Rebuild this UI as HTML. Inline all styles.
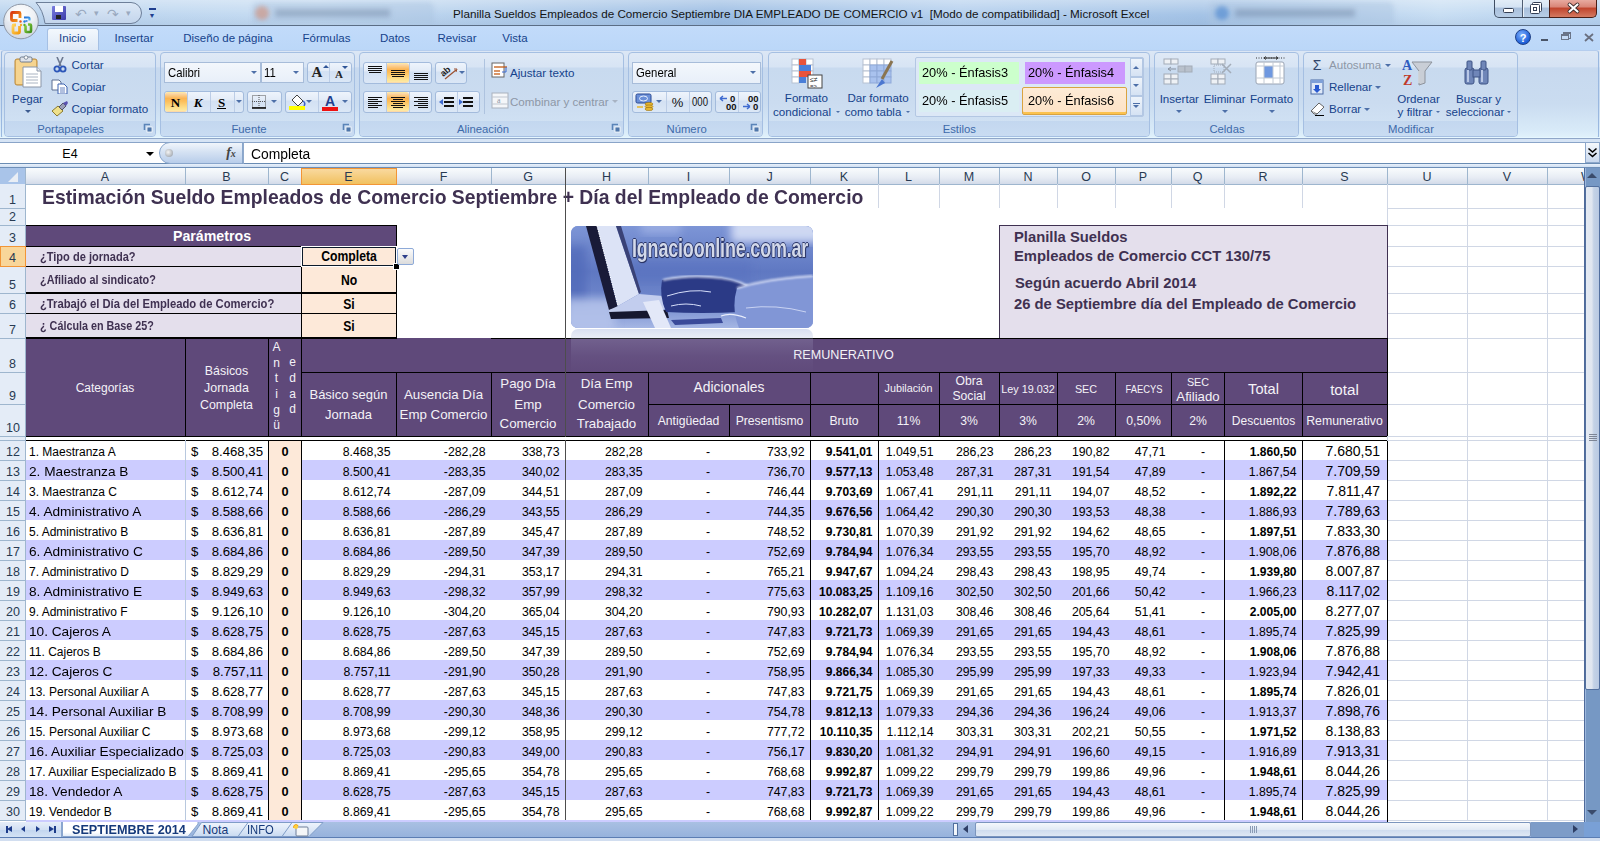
<!DOCTYPE html>
<html><head><meta charset="utf-8"><style>
html,body{margin:0;padding:0;width:1600px;height:841px;overflow:hidden;background:#fff}
#root{position:relative;width:1600px;height:841px;overflow:hidden;font-family:"Liberation Sans",sans-serif}
#root div{position:absolute}
#root .t{white-space:pre}
</style></head><body><div id="root">
<div style="left:0px;top:0px;width:1600px;height:25px;background:linear-gradient(90deg,#b9d3ee 0%,#c6dcf2 20%,#9cbde3 45%,#b5d0ee 60%,#a4c3e6 75%,#c8def3 90%,#b7d2ef 100%)"></div>
<div style="left:0px;top:0px;width:1600px;height:25px;background:linear-gradient(180deg,rgba(255,255,255,.35),rgba(255,255,255,0) 60%,rgba(120,150,190,.15))"></div>
<div style="left:252px;top:2px;width:182px;height:23px;background:rgba(170,195,225,.45);border-radius:6px 6px 0 0;filter:blur(2px)"></div>
<div style="left:1209px;top:2px;width:185px;height:23px;background:rgba(170,195,225,.45);border-radius:6px 6px 0 0;filter:blur(2px)"></div>
<div style="left:255px;top:6px;width:14px;height:14px;background:rgba(220,120,80,.45);border-radius:50%;filter:blur(2px)"></div>
<div style="left:275px;top:9px;width:115px;height:8px;background:rgba(60,80,110,.25);filter:blur(2.5px)"></div>
<div style="left:1215px;top:6px;width:14px;height:14px;background:rgba(40,110,200,.45);border-radius:50%;filter:blur(2px)"></div>
<div style="left:1235px;top:9px;width:120px;height:8px;background:rgba(60,80,110,.25);filter:blur(2.5px)"></div>
<div style="left:0px;top:25px;width:1600px;height:1px;background:#5b6d85"></div>
<div class="t" style="left:453px;top:8.10px;font-size:11.7px;line-height:11.7px;color:#141414;">Planilla Sueldos Empleados de Comercio Septiembre DIA EMPLEADO DE COMERCIO v1  [Modo de compatibilidad] - Microsoft Excel</div>
<div style="left:1494px;top:-1px;width:56px;height:19px;border:1px solid #3f4d62;border-top:none;border-radius:0 0 0 5px;background:linear-gradient(#e4eef8,#d4e3f3 45%,#a9c0dc 50%,#b7cde6);box-sizing:border-box"></div>
<div style="left:1549px;top:-1px;width:48px;height:19px;border:1px solid #4a1e16;border-top:none;border-radius:0 0 5px 0;background:linear-gradient(#eab0a6,#d98476 45%,#c0432c 50%,#d47a62);box-sizing:border-box"></div>
<div style="left:1522px;top:0px;width:1px;height:17px;background:#4f5d72"></div>
<div style="left:1523px;top:0px;width:1px;height:17px;background:#e8f0f8"></div>
<svg style="position:absolute;left:1500px;top:0" width="100" height="17"><rect x="3.5" y="8.5" width="10" height="4" rx="1" fill="#fff" stroke="#343f55"/><rect x="32.5" y="2.5" width="9" height="9" rx="1" fill="#fff" stroke="#343f55"/><rect x="30.5" y="4.5" width="9" height="9" rx="1" fill="#fff" stroke="#343f55"/><rect x="33.5" y="7.5" width="3" height="3" fill="none" stroke="#343f55"/><path d="M69.5,4.5 L77.5,11.5 M77.5,4.5 L69.5,11.5" stroke="#3a2a2a" stroke-width="3.8" stroke-linecap="round"/><path d="M69.5,4.5 L77.5,11.5 M77.5,4.5 L69.5,11.5" stroke="#fff" stroke-width="2.2" stroke-linecap="round"/></svg>
<svg style="position:absolute;left:30px;top:0" width="120" height="26"><defs><linearGradient id="qg" x1="0" y1="0" x2="0" y2="1"><stop offset="0" stop-color="#dde9f7"/><stop offset="1" stop-color="#c3d5ec"/></linearGradient></defs><path d="M6,2.5 H101 A10.5,10.5 0 0 1 101,23.5 H15 Q13,10 6,2.5 Z" fill="url(#qg)" stroke="#6d7f99"/></svg>
<div style="left:52px;top:6px;width:14px;height:14px;background:linear-gradient(135deg,#7a7de0,#3b3ba8);border-radius:1px"></div>
<div style="left:55px;top:6px;width:8px;height:6px;background:#fff"></div>
<div style="left:56px;top:15px;width:5px;height:4px;background:#222"></div>
<div class="t" style="left:81px;top:7.15px;font-size:14px;line-height:14px;color:#9aa9bf;transform:translateX(-50%) scaleX(1.0);transform-origin:50% 0;">&#x21B6;</div>
<div class="t" style="left:96px;top:9.38px;font-size:9px;line-height:9px;color:#9aa9bf;transform:translateX(-50%) scaleX(1.0);transform-origin:50% 0;">&#x25BE;</div>
<div class="t" style="left:113px;top:7.15px;font-size:14px;line-height:14px;color:#9aa9bf;transform:translateX(-50%) scaleX(1.0);transform-origin:50% 0;">&#x21B7;</div>
<div class="t" style="left:128px;top:9.38px;font-size:9px;line-height:9px;color:#9aa9bf;transform:translateX(-50%) scaleX(1.0);transform-origin:50% 0;">&#x25BE;</div>
<div style="left:149px;top:8px;width:7px;height:2px;background:#1f3f8f"></div>
<div class="t" style="left:152px;top:12.07px;font-size:7px;line-height:7px;color:#1f3f8f;transform:translateX(-50%) scaleX(1.0);transform-origin:50% 0;">&#x25BC;</div>
<div style="left:0px;top:26px;width:1600px;height:24px;background:linear-gradient(#c2dbfa,#bbd7f8)"></div>
<svg style="position:absolute;left:0;top:0" width="45" height="45" viewBox="0 0 45 45">
<defs><radialGradient id="ob" cx="50%" cy="30%" r="70%"><stop offset="0" stop-color="#ffffff"/><stop offset=".55" stop-color="#eef1f5"/><stop offset="1" stop-color="#c6cfdb"/></radialGradient>
<linearGradient id="obr" x1="0" y1="0" x2="1" y2="1"><stop offset="0" stop-color="#d9360f"/><stop offset="1" stop-color="#f7a21b"/></linearGradient>
<linearGradient id="oby" x1="0" y1="0" x2="1" y2="1"><stop offset="0" stop-color="#ffd35a"/><stop offset="1" stop-color="#f39c12"/></linearGradient>
<linearGradient id="obg" x1="0" y1="0" x2="1" y2="1"><stop offset="0" stop-color="#8cd13b"/><stop offset="1" stop-color="#3f8f1c"/></linearGradient>
<linearGradient id="obb" x1="0" y1="0" x2="1" y2="1"><stop offset="0" stop-color="#1e6fd8"/><stop offset="1" stop-color="#4fb2f0"/></linearGradient></defs>
<circle cx="21" cy="21.5" r="17.3" fill="url(#ob)" stroke="#8f98a6" stroke-width="1"/>
<path d="M4.5,21.5 A16.5,16.5 0 0 0 37.5,21.5" fill="#dfe5ee" opacity=".45"/>
<path d="M17.5,20.5 H12.5 Q11.5,20.5 11.5,19.5 V13.5 Q11.5,12.5 12.5,12.5 H19 Q20,12.5 20,13.5 V18" fill="none" stroke="url(#obr)" stroke-width="2.8"/>
<path d="M24,17.5 H28.5 Q29.5,17.5 29.5,18.5 V20.5" fill="none" stroke="url(#obb)" stroke-width="2.2"/><path d="M25.5,21 H27.5" stroke="#2a7ddf" stroke-width="1.6"/>
<path d="M19.5,26 V32 Q19.5,33 18.5,33 H14 Q13,33 13,32 V26 Q13,25 14,25 H16" fill="none" stroke="url(#oby)" stroke-width="2.8"/>
<path d="M25.5,25.5 V31 Q25.5,32 26.5,32 H30 Q31,32 31,31 V25.5 Q31,24.5 30,24.5 H28" fill="none" stroke="url(#obg)" stroke-width="2.6"/>
<circle cx="20.5" cy="21.5" r="1.2" fill="#e8561c"/><circle cx="24.5" cy="21.5" r="1.2" fill="#2a7ddf"/><circle cx="21" cy="25" r="1.2" fill="#f6b02a"/><circle cx="24.5" cy="25" r="1.2" fill="#58b02a"/>
</svg>
<div style="left:47px;top:28px;width:52px;height:23px;background:linear-gradient(#f3f8fd,#dde8f6);border:1px solid #a5c0e4;border-bottom:none;border-radius:3px 3px 0 0;box-sizing:border-box"></div>
<div class="t" style="left:72.5px;top:33.27px;font-size:11.5px;line-height:11.5px;color:#15428b;transform:translateX(-50%) scaleX(1.0);transform-origin:50% 0;">Inicio</div>
<div class="t" style="left:134px;top:33.27px;font-size:11.5px;line-height:11.5px;color:#15428b;transform:translateX(-50%) scaleX(1.0);transform-origin:50% 0;">Insertar</div>
<div class="t" style="left:228px;top:33.27px;font-size:11.5px;line-height:11.5px;color:#15428b;transform:translateX(-50%) scaleX(1.0);transform-origin:50% 0;">Diseño de página</div>
<div class="t" style="left:326.5px;top:33.27px;font-size:11.5px;line-height:11.5px;color:#15428b;transform:translateX(-50%) scaleX(1.0);transform-origin:50% 0;">Fórmulas</div>
<div class="t" style="left:395px;top:33.27px;font-size:11.5px;line-height:11.5px;color:#15428b;transform:translateX(-50%) scaleX(1.0);transform-origin:50% 0;">Datos</div>
<div class="t" style="left:457px;top:33.27px;font-size:11.5px;line-height:11.5px;color:#15428b;transform:translateX(-50%) scaleX(1.0);transform-origin:50% 0;">Revisar</div>
<div class="t" style="left:515px;top:33.27px;font-size:11.5px;line-height:11.5px;color:#15428b;transform:translateX(-50%) scaleX(1.0);transform-origin:50% 0;">Vista</div>
<div style="left:1515px;top:29px;width:16px;height:16px;border-radius:50%;background:radial-gradient(circle at 40% 35%,#7fb2ff,#1b5cd6 70%);border:1px solid #1d3f86;box-sizing:border-box"></div>
<div class="t" style="left:1523px;top:32.69px;font-size:11px;line-height:11px;color:#fff;font-weight:bold;transform:translateX(-50%) scaleX(1.0);transform-origin:50% 0;">?</div>
<div style="left:1541px;top:39px;width:7px;height:2px;background:#4a5568"></div>
<svg style="position:absolute;left:1561px;top:32px" width="14" height="12"><rect x="2.5" y="0.5" width="7" height="6" fill="none" stroke="#6a7588"/><rect x="2.5" y="0.5" width="7" height="1.5" fill="#6a7588"/><rect x="0.5" y="2.5" width="7" height="5" fill="#c5dbf6" stroke="#6a7588"/><rect x="0.5" y="2.5" width="7" height="1.5" fill="#6a7588"/></svg>
<svg style="position:absolute;left:1584px;top:33px" width="10" height="9"><path d="M1,1 L9,8 M9,1 L1,8" stroke="#6a7080" stroke-width="1.8"/></svg>
<div style="left:0px;top:50px;width:1600px;height:89px;background:linear-gradient(#dce7f5 0%,#d5e2f3 19%,#c7d9ef 20%,#cadcf0 60%,#d8eaf8 90%,#e2f3fc 100%)"></div>
<div style="left:1px;top:50px;width:1598px;height:89px;border:1px solid #9ab8e0;border-top-color:#b5cdee;border-radius:3px;box-sizing:border-box"></div>
<div style="left:0px;top:137px;width:1600px;height:1px;background:#e6f7ff"></div>
<div style="left:0px;top:138px;width:1600px;height:1px;background:#8fa6c8"></div>
<div style="left:4px;top:52px;width:152px;height:85px;border:1px solid #a5bfe2;border-radius:4px;background:linear-gradient(#dfe9f6 0%,#d7e4f4 17%,#c8daef 18%,#cbdcf0 60%,#d3e4f5 100%);box-sizing:border-box"></div>
<div style="left:5px;top:121px;width:150px;height:15px;background:linear-gradient(#c3d7ef,#c9dcf2);border-radius:0 0 3px 3px"></div>
<div class="t" style="left:70.6px;top:124.03px;font-size:11.3px;line-height:11.3px;color:#3e6aaa;transform:translateX(-50%) scaleX(1.0);transform-origin:50% 0;">Portapapeles</div>
<div style="left:160px;top:52px;width:195px;height:85px;border:1px solid #a5bfe2;border-radius:4px;background:linear-gradient(#dfe9f6 0%,#d7e4f4 17%,#c8daef 18%,#cbdcf0 60%,#d3e4f5 100%);box-sizing:border-box"></div>
<div style="left:161px;top:121px;width:193px;height:15px;background:linear-gradient(#c3d7ef,#c9dcf2);border-radius:0 0 3px 3px"></div>
<div class="t" style="left:249px;top:124.03px;font-size:11.3px;line-height:11.3px;color:#3e6aaa;transform:translateX(-50%) scaleX(1.0);transform-origin:50% 0;">Fuente</div>
<div style="left:359px;top:52px;width:265px;height:85px;border:1px solid #a5bfe2;border-radius:4px;background:linear-gradient(#dfe9f6 0%,#d7e4f4 17%,#c8daef 18%,#cbdcf0 60%,#d3e4f5 100%);box-sizing:border-box"></div>
<div style="left:360px;top:121px;width:263px;height:15px;background:linear-gradient(#c3d7ef,#c9dcf2);border-radius:0 0 3px 3px"></div>
<div class="t" style="left:483px;top:124.03px;font-size:11.3px;line-height:11.3px;color:#3e6aaa;transform:translateX(-50%) scaleX(1.0);transform-origin:50% 0;">Alineación</div>
<div style="left:628px;top:52px;width:135px;height:85px;border:1px solid #a5bfe2;border-radius:4px;background:linear-gradient(#dfe9f6 0%,#d7e4f4 17%,#c8daef 18%,#cbdcf0 60%,#d3e4f5 100%);box-sizing:border-box"></div>
<div style="left:629px;top:121px;width:133px;height:15px;background:linear-gradient(#c3d7ef,#c9dcf2);border-radius:0 0 3px 3px"></div>
<div class="t" style="left:686.6px;top:124.03px;font-size:11.3px;line-height:11.3px;color:#3e6aaa;transform:translateX(-50%) scaleX(1.0);transform-origin:50% 0;">Número</div>
<div style="left:768px;top:52px;width:382px;height:85px;border:1px solid #a5bfe2;border-radius:4px;background:linear-gradient(#dfe9f6 0%,#d7e4f4 17%,#c8daef 18%,#cbdcf0 60%,#d3e4f5 100%);box-sizing:border-box"></div>
<div style="left:769px;top:121px;width:380px;height:15px;background:linear-gradient(#c3d7ef,#c9dcf2);border-radius:0 0 3px 3px"></div>
<div class="t" style="left:959.3px;top:124.03px;font-size:11.3px;line-height:11.3px;color:#3e6aaa;transform:translateX(-50%) scaleX(1.0);transform-origin:50% 0;">Estilos</div>
<div style="left:1154px;top:52px;width:145px;height:85px;border:1px solid #a5bfe2;border-radius:4px;background:linear-gradient(#dfe9f6 0%,#d7e4f4 17%,#c8daef 18%,#cbdcf0 60%,#d3e4f5 100%);box-sizing:border-box"></div>
<div style="left:1155px;top:121px;width:143px;height:15px;background:linear-gradient(#c3d7ef,#c9dcf2);border-radius:0 0 3px 3px"></div>
<div class="t" style="left:1227px;top:124.03px;font-size:11.3px;line-height:11.3px;color:#3e6aaa;transform:translateX(-50%) scaleX(1.0);transform-origin:50% 0;">Celdas</div>
<div style="left:1303px;top:52px;width:215px;height:85px;border:1px solid #a5bfe2;border-radius:4px;background:linear-gradient(#dfe9f6 0%,#d7e4f4 17%,#c8daef 18%,#cbdcf0 60%,#d3e4f5 100%);box-sizing:border-box"></div>
<div style="left:1304px;top:121px;width:213px;height:15px;background:linear-gradient(#c3d7ef,#c9dcf2);border-radius:0 0 3px 3px"></div>
<div class="t" style="left:1411px;top:124.03px;font-size:11.3px;line-height:11.3px;color:#3e6aaa;transform:translateX(-50%) scaleX(1.0);transform-origin:50% 0;">Modificar</div>
<svg style="position:absolute;left:143px;top:123px" width="10" height="10"><path d="M1.5,7 V1.5 H7" stroke="#5a84b8" stroke-width="1.6" fill="none"/><rect x="4" y="4" width="5" height="5" fill="#4f77ab" stroke="#fff" stroke-width=".8"/></svg>
<svg style="position:absolute;left:342px;top:123px" width="10" height="10"><path d="M1.5,7 V1.5 H7" stroke="#5a84b8" stroke-width="1.6" fill="none"/><rect x="4" y="4" width="5" height="5" fill="#4f77ab" stroke="#fff" stroke-width=".8"/></svg>
<svg style="position:absolute;left:611px;top:123px" width="10" height="10"><path d="M1.5,7 V1.5 H7" stroke="#5a84b8" stroke-width="1.6" fill="none"/><rect x="4" y="4" width="5" height="5" fill="#4f77ab" stroke="#fff" stroke-width=".8"/></svg>
<svg style="position:absolute;left:750px;top:123px" width="10" height="10"><path d="M1.5,7 V1.5 H7" stroke="#5a84b8" stroke-width="1.6" fill="none"/><rect x="4" y="4" width="5" height="5" fill="#4f77ab" stroke="#fff" stroke-width=".8"/></svg>
<div style="left:0px;top:139px;width:1600px;height:29px;background:#d6e4f5"></div>
<div style="left:0px;top:142px;width:1600px;height:22px;background:#fff;border-top:1px solid #8aa4c8;border-bottom:1px solid #6a8cb3;box-sizing:border-box"></div>
<div style="left:0px;top:164px;width:1600px;height:3px;background:linear-gradient(#e9f1fb,#cfdff2)"></div>
<div style="left:0px;top:167px;width:1600px;height:1px;background:#6e8fb8"></div>
<div class="t" style="left:70px;top:148.42px;font-size:12.5px;line-height:12.5px;color:#000;transform:translateX(-50%) scaleX(1.0);transform-origin:50% 0;">E4</div>
<div style="left:145.5px;top:151.5px;width:0;height:0;border-left:4px solid transparent;border-right:4px solid transparent;border-top:4.5px solid #000"></div>
<div style="left:159px;top:142px;width:84px;height:22px;border:1px solid #89a6cc;border-radius:11px 0 0 11px;background:linear-gradient(#f0f5fb,#d5e2f3 45%,#b8cdea);box-sizing:border-box"></div>
<div style="left:165px;top:149px;width:8px;height:8px;border-radius:50%;background:radial-gradient(circle at 40% 40%,#f4f4f4,#8e96a0)"></div>
<div class="t" style="left:231px;top:146.15px;font-size:14px;line-height:14px;color:#444;font-family:'Liberation Serif',serif;transform:translateX(-50%) scaleX(1.0);transform-origin:50% 0;"><b><i>f</i><i style="font-size:10px">x</i></b></div>
<div style="left:243px;top:142px;width:1px;height:22px;background:#8fa9cb"></div>
<div class="t" style="left:251px;top:147.15px;font-size:14px;line-height:14px;color:#000;transform:scaleX(0.99);transform-origin:0 0;">Completa</div>
<div style="left:1585px;top:142px;width:15px;height:21px;background:linear-gradient(#f5f8fc,#c8d8ee);border:1px solid #8ea8cb;box-sizing:border-box"></div>
<svg style="position:absolute;left:1587px;top:147px" width="11" height="12"><path d="M1.5,1.5 L5.5,5 L9.5,1.5 M1.5,6 L5.5,9.5 L9.5,6" stroke="#000" stroke-width="1.6" fill="none"/></svg>
<div style="left:0px;top:168px;width:1584px;height:653px;background:#fff"></div>
<div style="left:185px;top:184px;width:1px;height:637px;background:#d0d7e5"></div>
<div style="left:268px;top:184px;width:1px;height:637px;background:#d0d7e5"></div>
<div style="left:301px;top:184px;width:1px;height:637px;background:#d0d7e5"></div>
<div style="left:396px;top:184px;width:1px;height:637px;background:#d0d7e5"></div>
<div style="left:491px;top:184px;width:1px;height:637px;background:#d0d7e5"></div>
<div style="left:565px;top:184px;width:1px;height:637px;background:#d0d7e5"></div>
<div style="left:648px;top:184px;width:1px;height:637px;background:#d0d7e5"></div>
<div style="left:729px;top:184px;width:1px;height:637px;background:#d0d7e5"></div>
<div style="left:810px;top:184px;width:1px;height:637px;background:#d0d7e5"></div>
<div style="left:878px;top:184px;width:1px;height:637px;background:#d0d7e5"></div>
<div style="left:939px;top:184px;width:1px;height:637px;background:#d0d7e5"></div>
<div style="left:999px;top:184px;width:1px;height:637px;background:#d0d7e5"></div>
<div style="left:1057px;top:184px;width:1px;height:637px;background:#d0d7e5"></div>
<div style="left:1115px;top:184px;width:1px;height:637px;background:#d0d7e5"></div>
<div style="left:1171px;top:184px;width:1px;height:637px;background:#d0d7e5"></div>
<div style="left:1224px;top:184px;width:1px;height:637px;background:#d0d7e5"></div>
<div style="left:1302px;top:184px;width:1px;height:637px;background:#d0d7e5"></div>
<div style="left:1387px;top:184px;width:1px;height:637px;background:#d0d7e5"></div>
<div style="left:1467px;top:184px;width:1px;height:637px;background:#d0d7e5"></div>
<div style="left:1547px;top:184px;width:1px;height:637px;background:#d0d7e5"></div>
<div style="left:1627px;top:184px;width:1px;height:637px;background:#d0d7e5"></div>
<div style="left:25px;top:208px;width:1559px;height:1px;background:#d0d7e5"></div>
<div style="left:25px;top:225px;width:1559px;height:1px;background:#d0d7e5"></div>
<div style="left:25px;top:246px;width:1559px;height:1px;background:#d0d7e5"></div>
<div style="left:25px;top:266px;width:1559px;height:1px;background:#d0d7e5"></div>
<div style="left:25px;top:293px;width:1559px;height:1px;background:#d0d7e5"></div>
<div style="left:25px;top:313px;width:1559px;height:1px;background:#d0d7e5"></div>
<div style="left:25px;top:338px;width:1559px;height:1px;background:#d0d7e5"></div>
<div style="left:25px;top:372px;width:1559px;height:1px;background:#d0d7e5"></div>
<div style="left:25px;top:404px;width:1559px;height:1px;background:#d0d7e5"></div>
<div style="left:25px;top:436px;width:1559px;height:1px;background:#d0d7e5"></div>
<div style="left:25px;top:460px;width:1559px;height:1px;background:#d0d7e5"></div>
<div style="left:25px;top:480px;width:1559px;height:1px;background:#d0d7e5"></div>
<div style="left:25px;top:500px;width:1559px;height:1px;background:#d0d7e5"></div>
<div style="left:25px;top:520px;width:1559px;height:1px;background:#d0d7e5"></div>
<div style="left:25px;top:540px;width:1559px;height:1px;background:#d0d7e5"></div>
<div style="left:25px;top:560px;width:1559px;height:1px;background:#d0d7e5"></div>
<div style="left:25px;top:580px;width:1559px;height:1px;background:#d0d7e5"></div>
<div style="left:25px;top:600px;width:1559px;height:1px;background:#d0d7e5"></div>
<div style="left:25px;top:620px;width:1559px;height:1px;background:#d0d7e5"></div>
<div style="left:25px;top:640px;width:1559px;height:1px;background:#d0d7e5"></div>
<div style="left:25px;top:660px;width:1559px;height:1px;background:#d0d7e5"></div>
<div style="left:25px;top:680px;width:1559px;height:1px;background:#d0d7e5"></div>
<div style="left:25px;top:700px;width:1559px;height:1px;background:#d0d7e5"></div>
<div style="left:25px;top:720px;width:1559px;height:1px;background:#d0d7e5"></div>
<div style="left:25px;top:740px;width:1559px;height:1px;background:#d0d7e5"></div>
<div style="left:25px;top:760px;width:1559px;height:1px;background:#d0d7e5"></div>
<div style="left:25px;top:780px;width:1559px;height:1px;background:#d0d7e5"></div>
<div style="left:25px;top:800px;width:1559px;height:1px;background:#d0d7e5"></div>
<div style="left:25px;top:820px;width:1559px;height:1px;background:#d0d7e5"></div>
<div style="left:0px;top:168px;width:1584px;height:16px;background:linear-gradient(#f9fcfd,#e7ecf4 60%,#d3dbe9)"></div>
<div style="left:0px;top:184px;width:1584px;height:1px;background:#9eb6ce"></div>
<div style="left:185px;top:168px;width:1px;height:16px;background:#9eb6ce"></div>
<div class="t" style="left:105.0px;top:171.22px;font-size:12.5px;line-height:12.5px;color:#283a52;transform:translateX(-50%) scaleX(1.0);transform-origin:50% 0;">A</div>
<div style="left:268px;top:168px;width:1px;height:16px;background:#9eb6ce"></div>
<div class="t" style="left:226.5px;top:171.22px;font-size:12.5px;line-height:12.5px;color:#283a52;transform:translateX(-50%) scaleX(1.0);transform-origin:50% 0;">B</div>
<div style="left:301px;top:168px;width:1px;height:16px;background:#9eb6ce"></div>
<div class="t" style="left:284.5px;top:171.22px;font-size:12.5px;line-height:12.5px;color:#283a52;transform:translateX(-50%) scaleX(1.0);transform-origin:50% 0;">C</div>
<div style="left:396px;top:168px;width:1px;height:16px;background:#9eb6ce"></div>
<div class="t" style="left:348.5px;top:171.22px;font-size:12.5px;line-height:12.5px;color:#283a52;transform:translateX(-50%) scaleX(1.0);transform-origin:50% 0;">E</div>
<div style="left:491px;top:168px;width:1px;height:16px;background:#9eb6ce"></div>
<div class="t" style="left:443.5px;top:171.22px;font-size:12.5px;line-height:12.5px;color:#283a52;transform:translateX(-50%) scaleX(1.0);transform-origin:50% 0;">F</div>
<div style="left:565px;top:168px;width:1px;height:16px;background:#9eb6ce"></div>
<div class="t" style="left:528.0px;top:171.22px;font-size:12.5px;line-height:12.5px;color:#283a52;transform:translateX(-50%) scaleX(1.0);transform-origin:50% 0;">G</div>
<div style="left:648px;top:168px;width:1px;height:16px;background:#9eb6ce"></div>
<div class="t" style="left:606.5px;top:171.22px;font-size:12.5px;line-height:12.5px;color:#283a52;transform:translateX(-50%) scaleX(1.0);transform-origin:50% 0;">H</div>
<div style="left:729px;top:168px;width:1px;height:16px;background:#9eb6ce"></div>
<div class="t" style="left:688.5px;top:171.22px;font-size:12.5px;line-height:12.5px;color:#283a52;transform:translateX(-50%) scaleX(1.0);transform-origin:50% 0;">I</div>
<div style="left:810px;top:168px;width:1px;height:16px;background:#9eb6ce"></div>
<div class="t" style="left:769.5px;top:171.22px;font-size:12.5px;line-height:12.5px;color:#283a52;transform:translateX(-50%) scaleX(1.0);transform-origin:50% 0;">J</div>
<div style="left:878px;top:168px;width:1px;height:16px;background:#9eb6ce"></div>
<div class="t" style="left:844.0px;top:171.22px;font-size:12.5px;line-height:12.5px;color:#283a52;transform:translateX(-50%) scaleX(1.0);transform-origin:50% 0;">K</div>
<div style="left:939px;top:168px;width:1px;height:16px;background:#9eb6ce"></div>
<div class="t" style="left:908.5px;top:171.22px;font-size:12.5px;line-height:12.5px;color:#283a52;transform:translateX(-50%) scaleX(1.0);transform-origin:50% 0;">L</div>
<div style="left:999px;top:168px;width:1px;height:16px;background:#9eb6ce"></div>
<div class="t" style="left:969.0px;top:171.22px;font-size:12.5px;line-height:12.5px;color:#283a52;transform:translateX(-50%) scaleX(1.0);transform-origin:50% 0;">M</div>
<div style="left:1057px;top:168px;width:1px;height:16px;background:#9eb6ce"></div>
<div class="t" style="left:1028.0px;top:171.22px;font-size:12.5px;line-height:12.5px;color:#283a52;transform:translateX(-50%) scaleX(1.0);transform-origin:50% 0;">N</div>
<div style="left:1115px;top:168px;width:1px;height:16px;background:#9eb6ce"></div>
<div class="t" style="left:1086.0px;top:171.22px;font-size:12.5px;line-height:12.5px;color:#283a52;transform:translateX(-50%) scaleX(1.0);transform-origin:50% 0;">O</div>
<div style="left:1171px;top:168px;width:1px;height:16px;background:#9eb6ce"></div>
<div class="t" style="left:1143.0px;top:171.22px;font-size:12.5px;line-height:12.5px;color:#283a52;transform:translateX(-50%) scaleX(1.0);transform-origin:50% 0;">P</div>
<div style="left:1224px;top:168px;width:1px;height:16px;background:#9eb6ce"></div>
<div class="t" style="left:1197.5px;top:171.22px;font-size:12.5px;line-height:12.5px;color:#283a52;transform:translateX(-50%) scaleX(1.0);transform-origin:50% 0;">Q</div>
<div style="left:1302px;top:168px;width:1px;height:16px;background:#9eb6ce"></div>
<div class="t" style="left:1263.0px;top:171.22px;font-size:12.5px;line-height:12.5px;color:#283a52;transform:translateX(-50%) scaleX(1.0);transform-origin:50% 0;">R</div>
<div style="left:1387px;top:168px;width:1px;height:16px;background:#9eb6ce"></div>
<div class="t" style="left:1344.5px;top:171.22px;font-size:12.5px;line-height:12.5px;color:#283a52;transform:translateX(-50%) scaleX(1.0);transform-origin:50% 0;">S</div>
<div style="left:1467px;top:168px;width:1px;height:16px;background:#9eb6ce"></div>
<div class="t" style="left:1427.0px;top:171.22px;font-size:12.5px;line-height:12.5px;color:#283a52;transform:translateX(-50%) scaleX(1.0);transform-origin:50% 0;">U</div>
<div style="left:1547px;top:168px;width:1px;height:16px;background:#9eb6ce"></div>
<div class="t" style="left:1507.0px;top:171.22px;font-size:12.5px;line-height:12.5px;color:#283a52;transform:translateX(-50%) scaleX(1.0);transform-origin:50% 0;">V</div>
<div class="t" style="left:1587.0px;top:171.22px;font-size:12.5px;line-height:12.5px;color:#283a52;transform:translateX(-50%) scaleX(1.0);transform-origin:50% 0;">W</div>
<div style="left:0px;top:168px;width:25px;height:16px;background:#a9c4e9"></div>
<div style="left:8px;top:172px;width:0;height:0;border-left:10px solid transparent;border-bottom:10px solid #e9eef5"></div>
<div style="left:301px;top:168px;width:96px;height:17px;background:linear-gradient(#f9d99f,#f1c15f);border:1px solid #f29536;box-sizing:border-box"></div>
<div class="t" style="left:348.5px;top:171.22px;font-size:12.5px;line-height:12.5px;color:#283a52;transform:translateX(-50%) scaleX(1.0);transform-origin:50% 0;">E</div>
<div style="left:0px;top:184px;width:25px;height:637px;background:#e4ecf7"></div>
<div style="left:25px;top:168px;width:1px;height:653px;background:#9eb6ce"></div>
<div style="left:0px;top:208px;width:25px;height:1px;background:#9eb6ce"></div>
<div class="t" style="left:12.5px;top:194.12px;font-size:12.5px;line-height:12.5px;color:#283a52;transform:translateX(-50%) scaleX(1.0);transform-origin:50% 0;">1</div>
<div style="left:0px;top:225px;width:25px;height:1px;background:#9eb6ce"></div>
<div class="t" style="left:12.5px;top:211.12px;font-size:12.5px;line-height:12.5px;color:#283a52;transform:translateX(-50%) scaleX(1.0);transform-origin:50% 0;">2</div>
<div style="left:0px;top:246px;width:25px;height:1px;background:#9eb6ce"></div>
<div class="t" style="left:12.5px;top:232.12px;font-size:12.5px;line-height:12.5px;color:#283a52;transform:translateX(-50%) scaleX(1.0);transform-origin:50% 0;">3</div>
<div style="left:0px;top:266px;width:25px;height:1px;background:#9eb6ce"></div>
<div style="left:0px;top:246px;width:26px;height:21px;background:#f8d69a;border:1px solid #f29536;box-sizing:border-box"></div>
<div class="t" style="left:12.5px;top:252.12px;font-size:12.5px;line-height:12.5px;color:#283a52;transform:translateX(-50%) scaleX(1.0);transform-origin:50% 0;">4</div>
<div style="left:0px;top:293px;width:25px;height:1px;background:#9eb6ce"></div>
<div class="t" style="left:12.5px;top:279.12px;font-size:12.5px;line-height:12.5px;color:#283a52;transform:translateX(-50%) scaleX(1.0);transform-origin:50% 0;">5</div>
<div style="left:0px;top:313px;width:25px;height:1px;background:#9eb6ce"></div>
<div class="t" style="left:12.5px;top:299.12px;font-size:12.5px;line-height:12.5px;color:#283a52;transform:translateX(-50%) scaleX(1.0);transform-origin:50% 0;">6</div>
<div style="left:0px;top:338px;width:25px;height:1px;background:#9eb6ce"></div>
<div class="t" style="left:12.5px;top:324.12px;font-size:12.5px;line-height:12.5px;color:#283a52;transform:translateX(-50%) scaleX(1.0);transform-origin:50% 0;">7</div>
<div style="left:0px;top:372px;width:25px;height:1px;background:#9eb6ce"></div>
<div class="t" style="left:12.5px;top:358.12px;font-size:12.5px;line-height:12.5px;color:#283a52;transform:translateX(-50%) scaleX(1.0);transform-origin:50% 0;">8</div>
<div style="left:0px;top:404px;width:25px;height:1px;background:#9eb6ce"></div>
<div class="t" style="left:12.5px;top:390.12px;font-size:12.5px;line-height:12.5px;color:#283a52;transform:translateX(-50%) scaleX(1.0);transform-origin:50% 0;">9</div>
<div style="left:0px;top:436px;width:25px;height:1px;background:#9eb6ce"></div>
<div class="t" style="left:13px;top:422.12px;font-size:12.5px;line-height:12.5px;color:#283a52;transform:translateX(-50%) scaleX(1.0);transform-origin:50% 0;">10</div>
<div style="left:0px;top:460px;width:25px;height:1px;background:#9eb6ce"></div>
<div class="t" style="left:13px;top:446.12px;font-size:12.5px;line-height:12.5px;color:#283a52;transform:translateX(-50%) scaleX(1.0);transform-origin:50% 0;">12</div>
<div style="left:0px;top:480px;width:25px;height:1px;background:#9eb6ce"></div>
<div class="t" style="left:13px;top:466.12px;font-size:12.5px;line-height:12.5px;color:#283a52;transform:translateX(-50%) scaleX(1.0);transform-origin:50% 0;">13</div>
<div style="left:0px;top:500px;width:25px;height:1px;background:#9eb6ce"></div>
<div class="t" style="left:13px;top:486.12px;font-size:12.5px;line-height:12.5px;color:#283a52;transform:translateX(-50%) scaleX(1.0);transform-origin:50% 0;">14</div>
<div style="left:0px;top:520px;width:25px;height:1px;background:#9eb6ce"></div>
<div class="t" style="left:13px;top:506.12px;font-size:12.5px;line-height:12.5px;color:#283a52;transform:translateX(-50%) scaleX(1.0);transform-origin:50% 0;">15</div>
<div style="left:0px;top:540px;width:25px;height:1px;background:#9eb6ce"></div>
<div class="t" style="left:13px;top:526.12px;font-size:12.5px;line-height:12.5px;color:#283a52;transform:translateX(-50%) scaleX(1.0);transform-origin:50% 0;">16</div>
<div style="left:0px;top:560px;width:25px;height:1px;background:#9eb6ce"></div>
<div class="t" style="left:13px;top:546.12px;font-size:12.5px;line-height:12.5px;color:#283a52;transform:translateX(-50%) scaleX(1.0);transform-origin:50% 0;">17</div>
<div style="left:0px;top:580px;width:25px;height:1px;background:#9eb6ce"></div>
<div class="t" style="left:13px;top:566.12px;font-size:12.5px;line-height:12.5px;color:#283a52;transform:translateX(-50%) scaleX(1.0);transform-origin:50% 0;">18</div>
<div style="left:0px;top:600px;width:25px;height:1px;background:#9eb6ce"></div>
<div class="t" style="left:13px;top:586.12px;font-size:12.5px;line-height:12.5px;color:#283a52;transform:translateX(-50%) scaleX(1.0);transform-origin:50% 0;">19</div>
<div style="left:0px;top:620px;width:25px;height:1px;background:#9eb6ce"></div>
<div class="t" style="left:13px;top:606.12px;font-size:12.5px;line-height:12.5px;color:#283a52;transform:translateX(-50%) scaleX(1.0);transform-origin:50% 0;">20</div>
<div style="left:0px;top:640px;width:25px;height:1px;background:#9eb6ce"></div>
<div class="t" style="left:13px;top:626.12px;font-size:12.5px;line-height:12.5px;color:#283a52;transform:translateX(-50%) scaleX(1.0);transform-origin:50% 0;">21</div>
<div style="left:0px;top:660px;width:25px;height:1px;background:#9eb6ce"></div>
<div class="t" style="left:13px;top:646.12px;font-size:12.5px;line-height:12.5px;color:#283a52;transform:translateX(-50%) scaleX(1.0);transform-origin:50% 0;">22</div>
<div style="left:0px;top:680px;width:25px;height:1px;background:#9eb6ce"></div>
<div class="t" style="left:13px;top:666.12px;font-size:12.5px;line-height:12.5px;color:#283a52;transform:translateX(-50%) scaleX(1.0);transform-origin:50% 0;">23</div>
<div style="left:0px;top:700px;width:25px;height:1px;background:#9eb6ce"></div>
<div class="t" style="left:13px;top:686.12px;font-size:12.5px;line-height:12.5px;color:#283a52;transform:translateX(-50%) scaleX(1.0);transform-origin:50% 0;">24</div>
<div style="left:0px;top:720px;width:25px;height:1px;background:#9eb6ce"></div>
<div class="t" style="left:13px;top:706.12px;font-size:12.5px;line-height:12.5px;color:#283a52;transform:translateX(-50%) scaleX(1.0);transform-origin:50% 0;">25</div>
<div style="left:0px;top:740px;width:25px;height:1px;background:#9eb6ce"></div>
<div class="t" style="left:13px;top:726.12px;font-size:12.5px;line-height:12.5px;color:#283a52;transform:translateX(-50%) scaleX(1.0);transform-origin:50% 0;">26</div>
<div style="left:0px;top:760px;width:25px;height:1px;background:#9eb6ce"></div>
<div class="t" style="left:13px;top:746.12px;font-size:12.5px;line-height:12.5px;color:#283a52;transform:translateX(-50%) scaleX(1.0);transform-origin:50% 0;">27</div>
<div style="left:0px;top:780px;width:25px;height:1px;background:#9eb6ce"></div>
<div class="t" style="left:13px;top:766.12px;font-size:12.5px;line-height:12.5px;color:#283a52;transform:translateX(-50%) scaleX(1.0);transform-origin:50% 0;">28</div>
<div style="left:0px;top:800px;width:25px;height:1px;background:#9eb6ce"></div>
<div class="t" style="left:13px;top:786.12px;font-size:12.5px;line-height:12.5px;color:#283a52;transform:translateX(-50%) scaleX(1.0);transform-origin:50% 0;">29</div>
<div style="left:0px;top:820px;width:25px;height:1px;background:#9eb6ce"></div>
<div class="t" style="left:13px;top:806.12px;font-size:12.5px;line-height:12.5px;color:#283a52;transform:translateX(-50%) scaleX(1.0);transform-origin:50% 0;">30</div>
<div style="left:0px;top:440px;width:25px;height:1px;background:#9eb6ce"></div>
<svg style="position:absolute;left:13px;top:55px" width="32" height="34" viewBox="0 0 32 34"><rect x="2" y="4" width="22" height="26" rx="2" fill="#f0c36d" stroke="#b8893f"/>
<rect x="3" y="5" width="20" height="24" rx="1" fill="#f6d48f"/>
<rect x="7" y="2" width="12" height="5" rx="1.5" fill="#dfe3ea" stroke="#6f7b8c"/>
<circle cx="13" cy="2.5" r="1.8" fill="#fff" stroke="#6f7b8c" stroke-width=".8"/>
<path d="M10,12 h14 l4,4 v16 h-18 z" fill="#fff" stroke="#8a96a8"/>
<path d="M24,12 v4 h4" fill="#e9edf3" stroke="#8a96a8"/>
<g stroke="#aab4c2" stroke-width="1"><line x1="13" y1="19" x2="25" y2="19"/><line x1="13" y1="22" x2="25" y2="22"/><line x1="13" y1="25" x2="25" y2="25"/><line x1="13" y1="28" x2="25" y2="28"/></g></svg>
<div class="t" style="left:27.5px;top:92.68px;font-size:11.6px;line-height:11.6px;color:#15428b;transform:translateX(-50%) scaleX(1.0);transform-origin:50% 0;">Pegar</div>
<div style="left:24.5px;top:109.5px;width:0;height:0;border-left:3px solid transparent;border-right:3px solid transparent;border-top:3px solid #3b5a8f"></div>
<svg style="position:absolute;left:53px;top:57px" width="14" height="16" viewBox="0 0 14 16"><path d="M4,0 L8,9 M10,0 L6,9" stroke="#6c7890" stroke-width="1.6" fill="none"/>
<circle cx="4" cy="12" r="2.6" fill="none" stroke="#2c56b8" stroke-width="1.8"/><circle cx="10" cy="12" r="2.6" fill="none" stroke="#2c56b8" stroke-width="1.8"/></svg>
<div class="t" style="left:71.5px;top:58.98px;font-size:11.6px;line-height:11.6px;color:#15428b;">Cortar</div>
<svg style="position:absolute;left:51px;top:79px" width="17" height="15" viewBox="0 0 17 15"><path d="M1,1 h7 l2,2 v8 h-9z" fill="#fff" stroke="#5c6f92"/><path d="M7,5 h6 l3,3 v7 h-9z" fill="#fff" stroke="#3c63b0"/>
<g stroke="#3c63b0" stroke-width=".8"><line x1="9" y1="9" x2="14" y2="9"/><line x1="9" y1="11" x2="14" y2="11"/><line x1="9" y1="13" x2="14" y2="13"/></g></svg>
<div class="t" style="left:71.5px;top:80.78px;font-size:11.6px;line-height:11.6px;color:#15428b;">Copiar</div>
<svg style="position:absolute;left:51px;top:101px" width="18" height="16" viewBox="0 0 18 16"><path d="M1,10 L7,5 L12,10 L6,15 Z" fill="#efe08a" stroke="#8a7a30"/><path d="M8,6 L12,2 L15,5 L11,9Z" fill="#9a9fb8" stroke="#556"/><path d="M12,2 L16,0 L17,2 L15,5" fill="#5a52b0"/></svg>
<div class="t" style="left:71.5px;top:102.68px;font-size:11.6px;line-height:11.6px;color:#15428b;">Copiar formato</div>
<div style="left:164px;top:62px;width:97px;height:21px;background:linear-gradient(#f3f7fc,#e8eff9);border:1px solid #a7bcd9;box-sizing:border-box"></div>
<div style="left:261px;top:62px;width:43px;height:21px;background:linear-gradient(#f3f7fc,#e8eff9);border:1px solid #a7bcd9;box-sizing:border-box"></div>
<div class="t" style="left:167.5px;top:67.17px;font-size:12.2px;line-height:12.2px;color:#000;transform:scaleX(0.93);transform-origin:0 0;">Calibri</div>
<div class="t" style="left:263.7px;top:67.17px;font-size:12.2px;line-height:12.2px;color:#000;transform:scaleX(0.93);transform-origin:0 0;">11</div>
<div style="left:250.5px;top:70.5px;width:0;height:0;border-left:3px solid transparent;border-right:3px solid transparent;border-top:3px solid #4d6fa8"></div>
<div style="left:293px;top:70.5px;width:0;height:0;border-left:3px solid transparent;border-right:3px solid transparent;border-top:3px solid #4d6fa8"></div>
<div style="left:307px;top:62px;width:45px;height:21px;background:linear-gradient(#eef4fc,#e2ebf7 40%,#d3e1f3 45%,#dbe7f6 100%);border:1px solid #a3bbdc;border-radius:3px;box-sizing:border-box"></div>
<div style="left:329px;top:63px;width:1px;height:19px;background:#bccde6"></div>
<div class="t" style="left:317px;top:65.30px;font-size:15px;line-height:15px;color:#222;font-weight:bold;font-family:'Liberation Serif',serif;transform:translateX(-50%) scaleX(1.0);transform-origin:50% 0;">A</div>
<div style="left:323px;top:65px;width:0;height:0;border-left:3px solid transparent;border-right:3px solid transparent;border-bottom:3px solid #2f5597"></div>
<div class="t" style="left:339px;top:68.69px;font-size:11px;line-height:11px;color:#222;font-weight:bold;font-family:'Liberation Serif',serif;transform:translateX(-50%) scaleX(1.0);transform-origin:50% 0;">A</div>
<div style="left:342px;top:65.5px;width:0;height:0;border-left:3px solid transparent;border-right:3px solid transparent;border-top:3px solid #2f5597"></div>
<div style="left:164px;top:91px;width:80px;height:22px;background:linear-gradient(#eef4fc,#e2ebf7 40%,#d3e1f3 45%,#dbe7f6 100%);border:1px solid #a3bbdc;border-radius:3px;box-sizing:border-box"></div>
<div style="left:165px;top:92px;width:22px;height:20px;background:linear-gradient(#fcdcb0 0%,#fbb555 30%,#fcbe5a 45%,#fde18f 85%,#fee9a5 100%);border:1px solid rgba(0,0,0,0);border-radius:3px;box-sizing:border-box"></div>
<div style="left:187px;top:92px;width:1px;height:20px;background:#b9cbe4"></div>
<div style="left:210px;top:92px;width:1px;height:20px;background:#bccde6"></div>
<div style="left:234px;top:92px;width:1px;height:20px;background:#bccde6"></div>
<div class="t" style="left:175.5px;top:95.50px;font-size:13px;line-height:13px;color:#000;font-weight:bold;font-family:'Liberation Serif',serif;transform:translateX(-50%) scaleX(1.0);transform-origin:50% 0;">N</div>
<div class="t" style="left:198px;top:95.50px;font-size:13px;line-height:13px;color:#000;font-weight:bold;font-style:italic;font-family:'Liberation Serif',serif;transform:translateX(-50%) scaleX(1.0);transform-origin:50% 0;">K</div>
<div class="t" style="left:221.5px;top:95.50px;font-size:13px;line-height:13px;color:#000;font-weight:bold;font-family:'Liberation Serif',serif;transform:translateX(-50%) scaleX(1.0);transform-origin:50% 0;">S</div>
<div style="left:217px;top:108px;width:9px;height:1px;background:#000"></div>
<div style="left:235.5px;top:100.0px;width:0;height:0;border-left:3px solid transparent;border-right:3px solid transparent;border-top:3px solid #4d6fa8"></div>
<div style="left:247px;top:91px;width:35px;height:22px;background:linear-gradient(#eef4fc,#e2ebf7 40%,#d3e1f3 45%,#dbe7f6 100%);border:1px solid #a3bbdc;border-radius:3px;box-sizing:border-box"></div>
<svg style="position:absolute;left:252px;top:95px" width="15" height="14" viewBox="0 0 15 14"><g stroke="#555" stroke-dasharray="1,1" fill="none"><rect x="0.5" y="0.5" width="13" height="12"/><line x1="7" y1="0" x2="7" y2="13"/><line x1="0" y1="6.5" x2="14" y2="6.5"/></g><line x1="0" y1="13" x2="14" y2="13" stroke="#000" stroke-width="1.5"/></svg>
<div style="left:271px;top:100.0px;width:0;height:0;border-left:3px solid transparent;border-right:3px solid transparent;border-top:3px solid #4d6fa8"></div>
<div style="left:285px;top:91px;width:67px;height:22px;background:linear-gradient(#eef4fc,#e2ebf7 40%,#d3e1f3 45%,#dbe7f6 100%);border:1px solid #a3bbdc;border-radius:3px;box-sizing:border-box"></div>
<div style="left:318px;top:92px;width:1px;height:20px;background:#bccde6"></div>
<svg style="position:absolute;left:289px;top:94px" width="18" height="16" viewBox="0 0 18 16"><path d="M3,6 L8,1 L14,7 L9,12 Z" fill="#fff" stroke="#444"/><path d="M14,7 q3,2 1,5" stroke="#3b63c8" stroke-width="1.5" fill="none"/><rect x="0" y="12" width="16" height="4" fill="#ffff00"/></svg>
<div style="left:306px;top:100.0px;width:0;height:0;border-left:3px solid transparent;border-right:3px solid transparent;border-top:3px solid #4d6fa8"></div>
<div class="t" style="left:330px;top:94.15px;font-size:14px;line-height:14px;color:#1f3f8f;font-weight:bold;transform:translateX(-50%) scaleX(1.0);transform-origin:50% 0;">A</div>
<div style="left:322px;top:107px;width:16px;height:4px;background:#ee1111"></div>
<div style="left:342px;top:100.0px;width:0;height:0;border-left:3px solid transparent;border-right:3px solid transparent;border-top:3px solid #4d6fa8"></div>
<div style="left:363px;top:62px;width:69px;height:22px;background:linear-gradient(#eef4fc,#e2ebf7 40%,#d3e1f3 45%,#dbe7f6 100%);border:1px solid #a3bbdc;border-radius:3px;box-sizing:border-box"></div>
<div style="left:386px;top:63px;width:23px;height:20px;background:linear-gradient(#fcdcb0 0%,#fbb555 30%,#fcbe5a 45%,#fde18f 85%,#fee9a5 100%);border:1px solid rgba(0,0,0,0);border-radius:3px;box-sizing:border-box"></div>
<div style="left:386px;top:63px;width:1px;height:20px;background:#b9cbe4"></div>
<div style="left:409px;top:63px;width:1px;height:20px;background:#b9cbe4"></div>
<div style="left:363px;top:91px;width:69px;height:22px;background:linear-gradient(#eef4fc,#e2ebf7 40%,#d3e1f3 45%,#dbe7f6 100%);border:1px solid #a3bbdc;border-radius:3px;box-sizing:border-box"></div>
<div style="left:386px;top:92px;width:23px;height:20px;background:linear-gradient(#fcdcb0 0%,#fbb555 30%,#fcbe5a 45%,#fde18f 85%,#fee9a5 100%);border:1px solid rgba(0,0,0,0);border-radius:3px;box-sizing:border-box"></div>
<div style="left:386px;top:92px;width:1px;height:20px;background:#b9cbe4"></div>
<div style="left:409px;top:92px;width:1px;height:20px;background:#b9cbe4"></div>
<div style="left:435px;top:62px;width:32px;height:22px;background:linear-gradient(#eef4fc,#e2ebf7 40%,#d3e1f3 45%,#dbe7f6 100%);border:1px solid #a3bbdc;border-radius:3px;box-sizing:border-box"></div>
<div style="left:435px;top:91px;width:45px;height:22px;background:linear-gradient(#eef4fc,#e2ebf7 40%,#d3e1f3 45%,#dbe7f6 100%);border:1px solid #a3bbdc;border-radius:3px;box-sizing:border-box"></div>
<div style="left:457px;top:92px;width:1px;height:20px;background:#bccde6"></div>
<div style="left:368.0px;top:66px;width:14px;height:1.3px;background:#111"></div>
<div style="left:368.0px;top:68px;width:14px;height:1.3px;background:#111"></div>
<div style="left:368.0px;top:70px;width:14px;height:1.3px;background:#111"></div>
<div style="left:369.0px;top:72px;width:12px;height:1.3px;background:#111"></div>
<div style="left:391.0px;top:70px;width:14px;height:1.3px;background:#111"></div>
<div style="left:391.0px;top:72px;width:14px;height:1.3px;background:#111"></div>
<div style="left:391.0px;top:74px;width:14px;height:1.3px;background:#111"></div>
<div style="left:392.0px;top:76px;width:12px;height:1.3px;background:#111"></div>
<div style="left:414.0px;top:73px;width:14px;height:1.3px;background:#111"></div>
<div style="left:414.0px;top:75px;width:14px;height:1.3px;background:#111"></div>
<div style="left:414.0px;top:77px;width:14px;height:1.3px;background:#111"></div>
<div style="left:414.0px;top:79px;width:14px;height:1.3px;background:#111"></div>
<div style="left:368px;top:96.5px;width:14px;height:1.3px;background:#111"></div>
<div style="left:368px;top:98.5px;width:10px;height:1.3px;background:#111"></div>
<div style="left:368px;top:100.5px;width:14px;height:1.3px;background:#111"></div>
<div style="left:368px;top:102.5px;width:10px;height:1.3px;background:#111"></div>
<div style="left:368px;top:104.5px;width:14px;height:1.3px;background:#111"></div>
<div style="left:368px;top:106.5px;width:10px;height:1.3px;background:#111"></div>
<div style="left:391.0px;top:96.5px;width:14px;height:1.3px;background:#111"></div>
<div style="left:393.0px;top:98.5px;width:10px;height:1.3px;background:#111"></div>
<div style="left:391.0px;top:100.5px;width:14px;height:1.3px;background:#111"></div>
<div style="left:393.0px;top:102.5px;width:10px;height:1.3px;background:#111"></div>
<div style="left:391.0px;top:104.5px;width:14px;height:1.3px;background:#111"></div>
<div style="left:393.0px;top:106.5px;width:10px;height:1.3px;background:#111"></div>
<div style="left:414px;top:96.5px;width:14px;height:1.3px;background:#111"></div>
<div style="left:418px;top:98.5px;width:10px;height:1.3px;background:#111"></div>
<div style="left:414px;top:100.5px;width:14px;height:1.3px;background:#111"></div>
<div style="left:418px;top:102.5px;width:10px;height:1.3px;background:#111"></div>
<div style="left:414px;top:104.5px;width:14px;height:1.3px;background:#111"></div>
<div style="left:418px;top:106.5px;width:10px;height:1.3px;background:#111"></div>
<svg style="position:absolute;left:439px;top:64px" width="24" height="17" viewBox="0 0 24 17"><text x="2" y="11" font-family="Liberation Sans" font-size="9" font-weight="bold" transform="rotate(-40 6 9)" fill="#222">ab</text><path d="M6,15 L17,6" stroke="#9a5030" stroke-width="1.2"/><path d="M15,5 l3,0 l-1,3" fill="none" stroke="#9a5030"/></svg>
<div style="left:459px;top:70.5px;width:0;height:0;border-left:3px solid transparent;border-right:3px solid transparent;border-top:3px solid #4d6fa8"></div>
<svg style="position:absolute;left:438px;top:94px" width="40" height="17" viewBox="0 0 40 17"><g fill="#111"><rect x="6" y="3" width="10" height="2"/><rect x="6" y="7" width="10" height="2"/><rect x="6" y="11" width="10" height="2"/><rect x="25" y="3" width="10" height="2"/><rect x="25" y="7" width="10" height="2"/><rect x="25" y="11" width="10" height="2"/></g><path d="M1,8 l4,-3 v6z" fill="#3d6ad0"/><path d="M25,8 l-4,-3 v6z" fill="#3d6ad0"/></svg>
<div style="left:484px;top:59px;width:1px;height:55px;background:#aec3df"></div>
<svg style="position:absolute;left:491px;top:61px" width="18" height="18" viewBox="0 0 18 18"><rect x="1" y="2" width="12" height="14" fill="#fff" stroke="#666"/><g stroke="#c55a11" stroke-width="1.3"><line x1="3" y1="6" x2="16" y2="6"/><line x1="3" y1="10" x2="9" y2="10"/><line x1="3" y1="13" x2="9" y2="13"/></g><path d="M15,6 v5 h-4" stroke="#3d6ad0" fill="none"/></svg>
<div class="t" style="left:510px;top:66.68px;font-size:11.6px;line-height:11.6px;color:#15428b;">Ajustar texto</div>
<svg style="position:absolute;left:491px;top:92px" width="18" height="17" viewBox="0 0 18 17"><rect x="1" y="1" width="16" height="15" fill="#f4f6f9" stroke="#a9b1bd"/><line x1="1" y1="5" x2="17" y2="5" stroke="#c0c6cf"/><line x1="1" y1="12" x2="17" y2="12" stroke="#c0c6cf"/><text x="6" y="11" font-family="Liberation Serif" font-size="8" fill="#8c96a4">a</text></svg>
<div class="t" style="left:510px;top:95.58px;font-size:11.6px;line-height:11.6px;color:#8d97a6;">Combinar y centrar</div>
<div style="left:611.5px;top:99.5px;width:0;height:0;border-left:3px solid transparent;border-right:3px solid transparent;border-top:3px solid #a8b3c3"></div>
<div style="left:632px;top:62px;width:129px;height:22px;background:linear-gradient(#f3f7fc,#e8eff9);border:1px solid #a7bcd9;box-sizing:border-box"></div>
<div class="t" style="left:635.5px;top:67.47px;font-size:12.2px;line-height:12.2px;color:#000;transform:scaleX(0.93);transform-origin:0 0;">General</div>
<div style="left:749.5px;top:70.5px;width:0;height:0;border-left:3px solid transparent;border-right:3px solid transparent;border-top:3px solid #4d6fa8"></div>
<div style="left:632px;top:91px;width:80px;height:22px;background:linear-gradient(#eef4fc,#e2ebf7 40%,#d3e1f3 45%,#dbe7f6 100%);border:1px solid #a3bbdc;border-radius:3px;box-sizing:border-box"></div>
<div style="left:666px;top:92px;width:1px;height:20px;background:#bccde6"></div>
<div style="left:689px;top:92px;width:1px;height:20px;background:#bccde6"></div>
<div style="left:715px;top:91px;width:46px;height:22px;background:linear-gradient(#eef4fc,#e2ebf7 40%,#d3e1f3 45%,#dbe7f6 100%);border:1px solid #a3bbdc;border-radius:3px;box-sizing:border-box"></div>
<div style="left:738px;top:92px;width:1px;height:20px;background:#bccde6"></div>
<svg style="position:absolute;left:635px;top:93px" width="24" height="18" viewBox="0 0 24 18"><rect x="1" y="1" width="15" height="9" rx="1.5" fill="#6a8fd8" stroke="#2b4a92"/><ellipse cx="8.5" cy="5.5" rx="4" ry="2.5" fill="none" stroke="#e8f0ff"/><g fill="#e8b830" stroke="#9a7010" stroke-width=".6"><ellipse cx="14" cy="11" rx="4" ry="1.6"/><ellipse cx="14" cy="13.5" rx="4" ry="1.6"/><ellipse cx="14" cy="16" rx="4" ry="1.6"/></g><path d="M2,14 h6" stroke="#e8b830" stroke-width="1.5"/></svg>
<div style="left:656px;top:100.0px;width:0;height:0;border-left:3px solid transparent;border-right:3px solid transparent;border-top:3px solid #4d6fa8"></div>
<div class="t" style="left:677.5px;top:95.50px;font-size:13px;line-height:13px;color:#111;transform:translateX(-50%) scaleX(1.0);transform-origin:50% 0;">%</div>
<div class="t" style="left:700px;top:96.34px;font-size:12px;line-height:12px;color:#111;transform:translateX(-50%) scaleX(0.8);transform-origin:50% 0;">000</div>
<svg style="position:absolute;left:718px;top:93px" width="42" height="19" viewBox="0 0 42 19"><g font-family="Liberation Sans" font-size="9.5" font-weight="bold" fill="#111"><text x="12" y="9">0</text><text x="8" y="17">00</text><text x="30" y="9">00</text><text x="35" y="17">0</text></g><path d="M2,5.5 h7 M2,5.5 l3,-2.5 M2,5.5 l3,2.5" stroke="#3d6ad0" stroke-width="1.5" fill="none"/><path d="M25,13.5 h7 M32,13.5 l-3,-2.5 M32,13.5 l-3,2.5" stroke="#3d6ad0" stroke-width="1.5" fill="none"/></svg>
<svg style="position:absolute;left:789px;top:57px" width="34" height="32" viewBox="0 0 34 32"><g stroke="#b7c2d2" fill="#fff"><rect x="3" y="2" width="7" height="6"/><rect x="10" y="2" width="7" height="6"/><rect x="17" y="2" width="7" height="6"/><rect x="3" y="8" width="7" height="6"/><rect x="17" y="8" width="7" height="6"/><rect x="3" y="14" width="7" height="6"/><rect x="17" y="14" width="7" height="6"/><rect x="3" y="20" width="7" height="6"/></g>
<rect x="10" y="2" width="7" height="6" fill="#e8533a"/><rect x="10" y="8" width="12" height="6" fill="#4a7fd8"/><rect x="10" y="14" width="12" height="6" fill="#e8533a"/><rect x="10" y="20" width="7" height="6" fill="#4a7fd8"/>
<rect x="19" y="18" width="14" height="13" fill="#fff" stroke="#444"/><text x="21" y="25" font-family="Liberation Sans" font-size="7" fill="#222">≤≠</text><text x="21" y="30.5" font-family="Liberation Sans" font-size="6" fill="#222">=&gt;</text></svg>
<div class="t" style="left:806.4px;top:92.38px;font-size:11.6px;line-height:11.6px;color:#15428b;transform:translateX(-50%) scaleX(1.0);transform-origin:50% 0;">Formato</div>
<div class="t" style="left:802px;top:106.08px;font-size:11.6px;line-height:11.6px;color:#15428b;transform:translateX(-50%) scaleX(1.0);transform-origin:50% 0;">condicional</div>
<div style="left:836.0px;top:110.75px;width:0;height:0;border-left:2.5px solid transparent;border-right:2.5px solid transparent;border-top:2.5px solid #4d6fa8"></div>
<svg style="position:absolute;left:861px;top:57px" width="34" height="32" viewBox="0 0 34 32"><g fill="#fff" stroke="#b7c2d2"><rect x="2" y="2" width="7" height="6"/><rect x="9" y="2" width="7" height="6"/><rect x="16" y="2" width="7" height="6"/><rect x="23" y="2" width="7" height="6"/><rect x="2" y="8" width="7" height="6"/><rect x="2" y="14" width="7" height="6"/><rect x="2" y="20" width="7" height="6"/></g>
<g fill="#a9c2ee" stroke="#8fa9d8"><rect x="9" y="8" width="7" height="6"/><rect x="16" y="8" width="7" height="6"/><rect x="23" y="8" width="7" height="6"/><rect x="9" y="14" width="7" height="6"/><rect x="16" y="14" width="7" height="6"/><rect x="23" y="14" width="7" height="6"/><rect x="9" y="20" width="7" height="6"/><rect x="16" y="20" width="7" height="6"/><rect x="23" y="20" width="7" height="6"/></g>
<path d="M31,4 L21,22" stroke="#8a7450" stroke-width="3"/><path d="M21,22 L15,31 L24,26Z" fill="#4b77d0"/></svg>
<div class="t" style="left:878px;top:92.38px;font-size:11.6px;line-height:11.6px;color:#15428b;transform:translateX(-50%) scaleX(1.0);transform-origin:50% 0;">Dar formato</div>
<div class="t" style="left:873px;top:106.08px;font-size:11.6px;line-height:11.6px;color:#15428b;transform:translateX(-50%) scaleX(1.0);transform-origin:50% 0;">como tabla</div>
<div style="left:906.0px;top:110.75px;width:0;height:0;border-left:2.5px solid transparent;border-right:2.5px solid transparent;border-top:2.5px solid #4d6fa8"></div>
<div style="left:915px;top:57px;width:229px;height:60px;background:#dce8f6;border:1px solid #b3c7e3;border-radius:2px;box-sizing:border-box"></div>
<div style="left:919px;top:62px;width:100px;height:22px;background:#ccffcc"></div>
<div style="left:1025px;top:62px;width:100px;height:22px;background:#cc99ff"></div>
<div style="left:919px;top:90px;width:100px;height:22px;background:#daeef3"></div>
<div style="left:1022px;top:87px;width:105px;height:28px;background:linear-gradient(#fdebd6,#fde2c6);border:1px solid #d9a341;border-radius:2px;box-sizing:border-box;box-shadow:inset 0 -2px 0 #fbc24e"></div>
<div class="t" style="left:922.3px;top:66.34px;font-size:13.3px;line-height:13.3px;color:#000;transform:scaleX(0.963);transform-origin:0 0;">20% - Énfasis3</div>
<div class="t" style="left:1028.3px;top:66.34px;font-size:13.3px;line-height:13.3px;color:#000;transform:scaleX(0.963);transform-origin:0 0;">20% - Énfasis4</div>
<div class="t" style="left:922.3px;top:94.34px;font-size:13.3px;line-height:13.3px;color:#000;transform:scaleX(0.963);transform-origin:0 0;">20% - Énfasis5</div>
<div class="t" style="left:1028.3px;top:94.34px;font-size:13.3px;line-height:13.3px;color:#000;transform:scaleX(0.963);transform-origin:0 0;">20% - Énfasis6</div>
<div style="left:1130px;top:58px;width:13px;height:19px;background:linear-gradient(#eef4fb,#d5e2f3);border:1px solid #b3c7e3;box-sizing:border-box"></div>
<div style="left:1130px;top:77px;width:13px;height:19px;background:linear-gradient(#eef4fb,#d5e2f3);border:1px solid #b3c7e3;box-sizing:border-box"></div>
<div style="left:1130px;top:96px;width:13px;height:20px;background:linear-gradient(#eef4fb,#d5e2f3);border:1px solid #b3c7e3;box-sizing:border-box"></div>
<div style="left:1133px;top:66px;width:0;height:0;border-left:3.5px solid transparent;border-right:3.5px solid transparent;border-bottom:3.5px solid #4d6fa8"></div>
<div style="left:1133.0px;top:84.25px;width:0;height:0;border-left:3.5px solid transparent;border-right:3.5px solid transparent;border-top:3.5px solid #4d6fa8"></div>
<div style="left:1133px;top:103px;width:7px;height:1px;background:#4d6fa8"></div>
<div style="left:1133.0px;top:105.25px;width:0;height:0;border-left:3.5px solid transparent;border-right:3.5px solid transparent;border-top:3.5px solid #4d6fa8"></div>
<svg style="position:absolute;left:1162px;top:57px" width="34" height="28" viewBox="0 0 34 28"><g fill="#eef1f5" stroke="#a3acb8"><rect x="2" y="2" width="7" height="5"/><rect x="9" y="2" width="7" height="5"/><rect x="2" y="17" width="7" height="5"/><rect x="9" y="17" width="7" height="5"/><rect x="2" y="22" width="7" height="5"/><rect x="9" y="22" width="7" height="5"/></g>
<g fill="#b9c1cc" stroke="#a3acb8"><rect x="16" y="9" width="7" height="6"/><rect x="23" y="9" width="7" height="6"/></g><path d="M14,12 h-8 M6,12 l3,-2 M6,12 l3,2" stroke="#8a93a0" fill="none"/></svg>
<svg style="position:absolute;left:1209px;top:57px" width="34" height="28" viewBox="0 0 34 28"><g fill="#eef1f5" stroke="#a3acb8"><rect x="2" y="2" width="7" height="5"/><rect x="9" y="2" width="7" height="5"/><rect x="2" y="17" width="7" height="5"/><rect x="9" y="17" width="7" height="5"/><rect x="2" y="22" width="7" height="5"/><rect x="9" y="22" width="7" height="5"/></g>
<rect x="5" y="8" width="10" height="7" fill="none" stroke="#a3acb8" stroke-dasharray="1,1"/><path d="M13,16 L22,7 M13,7 L22,16" stroke="#a3acb8" stroke-width="1.5"/></svg>
<svg style="position:absolute;left:1254px;top:55px" width="34" height="32" viewBox="0 0 34 32"><path d="M2,3 h30" stroke="#333" stroke-dasharray="1,1.5"/><path d="M10,3 h14 M10,3 l2,-1.5 M10,3 l2,1.5 M24,3 l-2,-1.5 M24,3 l-2,1.5" stroke="#333" fill="none"/>
<rect x="2" y="7" width="28" height="22" rx="2" fill="#fff" stroke="#9aa4b3"/><rect x="10" y="11" width="9" height="12" fill="#6f98e0"/><g stroke="#c3cad4"><line x1="2" y1="11" x2="30" y2="11"/><line x1="2" y1="23" x2="30" y2="23"/><line x1="10" y1="7" x2="10" y2="29"/><line x1="19" y1="7" x2="19" y2="29"/><line x1="26" y1="7" x2="26" y2="29"/></g></svg>
<div class="t" style="left:1179.3px;top:92.88px;font-size:11.6px;line-height:11.6px;color:#15428b;transform:translateX(-50%) scaleX(1.0);transform-origin:50% 0;">Insertar</div>
<div style="left:1176.3px;top:109.5px;width:0;height:0;border-left:3px solid transparent;border-right:3px solid transparent;border-top:3px solid #4d6fa8"></div>
<div class="t" style="left:1224.7px;top:92.88px;font-size:11.6px;line-height:11.6px;color:#15428b;transform:translateX(-50%) scaleX(1.0);transform-origin:50% 0;">Eliminar</div>
<div style="left:1221.7px;top:109.5px;width:0;height:0;border-left:3px solid transparent;border-right:3px solid transparent;border-top:3px solid #4d6fa8"></div>
<div class="t" style="left:1271.5px;top:92.88px;font-size:11.6px;line-height:11.6px;color:#15428b;transform:translateX(-50%) scaleX(1.0);transform-origin:50% 0;">Formato</div>
<div style="left:1268.5px;top:109.5px;width:0;height:0;border-left:3px solid transparent;border-right:3px solid transparent;border-top:3px solid #4d6fa8"></div>
<div class="t" style="left:1317px;top:57.65px;font-size:14px;line-height:14px;color:#33456b;transform:translateX(-50%) scaleX(1.0);transform-origin:50% 0;">Σ</div>
<div class="t" style="left:1329px;top:58.68px;font-size:11.6px;line-height:11.6px;color:#8d97a6;">Autosuma</div>
<div style="left:1384.5px;top:63.5px;width:0;height:0;border-left:3px solid transparent;border-right:3px solid transparent;border-top:3px solid #4d6fa8"></div>
<svg style="position:absolute;left:1310px;top:79px" width="15" height="16" viewBox="0 0 15 16"><rect x="1" y="1" width="12" height="14" fill="#dfe9f8" stroke="#4b6aa6"/><rect x="1" y="1" width="12" height="3" fill="#7fa0d8"/><path d="M5,6 h4 v4 h2 l-4,4 l-4,-4 h2z" fill="#2a5ad0"/></svg>
<div class="t" style="left:1329px;top:80.88px;font-size:11.6px;line-height:11.6px;color:#15428b;">Rellenar</div>
<div style="left:1375px;top:85.5px;width:0;height:0;border-left:3px solid transparent;border-right:3px solid transparent;border-top:3px solid #4d6fa8"></div>
<svg style="position:absolute;left:1310px;top:101px" width="16" height="15" viewBox="0 0 16 15"><path d="M1,10 L9,2 L14,6 L7,13 Z" fill="#fff" stroke="#666"/><path d="M1,10 L4,13 L7,13" fill="#ddd" stroke="#666"/><line x1="5" y1="14.5" x2="14" y2="14.5" stroke="#000"/></svg>
<div class="t" style="left:1329px;top:102.78px;font-size:11.6px;line-height:11.6px;color:#15428b;">Borrar</div>
<div style="left:1364px;top:107.5px;width:0;height:0;border-left:3px solid transparent;border-right:3px solid transparent;border-top:3px solid #4d6fa8"></div>
<svg style="position:absolute;left:1402px;top:57px" width="32" height="30" viewBox="0 0 32 30"><text x="0" y="13" font-family="Liberation Serif" font-size="14" font-weight="bold" fill="#2f5cc0">A</text><text x="1" y="28" font-family="Liberation Serif" font-size="14" font-weight="bold" fill="#c0392b">Z</text>
<path d="M10,5 h20 l-7,9 v12 l-6,2 v-14z" fill="#c9ced6" stroke="#8d939c"/><path d="M17,14 v12" stroke="#eee"/></svg>
<div class="t" style="left:1418.5px;top:93.08px;font-size:11.6px;line-height:11.6px;color:#15428b;transform:translateX(-50%) scaleX(1.0);transform-origin:50% 0;">Ordenar</div>
<div class="t" style="left:1415px;top:105.68px;font-size:11.6px;line-height:11.6px;color:#15428b;transform:translateX(-50%) scaleX(1.0);transform-origin:50% 0;">y filtrar</div>
<div style="left:1436.0px;top:110.75px;width:0;height:0;border-left:2.5px solid transparent;border-right:2.5px solid transparent;border-top:2.5px solid #4d6fa8"></div>
<svg style="position:absolute;left:1462px;top:58px" width="30" height="30" viewBox="0 0 30 30"><g fill="#6f86b8" stroke="#3f5486"><rect x="3" y="10" width="9" height="16" rx="2"/><rect x="17" y="10" width="9" height="16" rx="2"/><rect x="5" y="3" width="5" height="9" rx="1"/><rect x="19" y="3" width="5" height="9" rx="1"/><rect x="11" y="12" width="7" height="7"/></g><g fill="#b9c8e6"><rect x="5" y="12" width="2" height="12"/><rect x="19" y="12" width="2" height="12"/></g></svg>
<div class="t" style="left:1478.5px;top:93.08px;font-size:11.6px;line-height:11.6px;color:#15428b;transform:translateX(-50%) scaleX(1.0);transform-origin:50% 0;">Buscar y</div>
<div class="t" style="left:1475px;top:105.68px;font-size:11.6px;line-height:11.6px;color:#15428b;transform:translateX(-50%) scaleX(1.0);transform-origin:50% 0;">seleccionar</div>
<div style="left:1506.5px;top:110.75px;width:0;height:0;border-left:2.5px solid transparent;border-right:2.5px solid transparent;border-top:2.5px solid #4d6fa8"></div>
<div style="left:26px;top:185px;width:1361px;height:636px;background:#fff"></div>
<div style="left:878px;top:184px;width:1px;height:24px;background:#d0d7e5"></div>
<div style="left:939px;top:184px;width:1px;height:24px;background:#d0d7e5"></div>
<div style="left:999px;top:184px;width:1px;height:24px;background:#d0d7e5"></div>
<div style="left:1057px;top:184px;width:1px;height:24px;background:#d0d7e5"></div>
<div style="left:1115px;top:184px;width:1px;height:24px;background:#d0d7e5"></div>
<div style="left:1171px;top:184px;width:1px;height:24px;background:#d0d7e5"></div>
<div style="left:1224px;top:184px;width:1px;height:24px;background:#d0d7e5"></div>
<div style="left:1302px;top:184px;width:1px;height:24px;background:#d0d7e5"></div>
<div style="left:1387px;top:184px;width:1px;height:24px;background:#d0d7e5"></div>
<div style="left:1387px;top:208px;width:197px;height:1px;background:#d0d7e5"></div>
<div class="t" style="left:41.5px;top:187.66px;font-size:19.3px;line-height:19.3px;color:#3f3151;font-weight:bold;transform:scaleX(1.004);transform-origin:0 0;">Estimación Sueldo Empleados de Comercio Septiembre + Día del Empleado de Comercio</div>
<div style="left:26px;top:226px;width:370px;height:20px;background:#5f497a"></div>
<div style="left:26px;top:247px;width:275px;height:91px;background:#e4dfec"></div>
<div style="left:302px;top:247px;width:94px;height:91px;background:#fde9d9"></div>
<div style="left:26px;top:225px;width:371px;height:1px;background:#000"></div>
<div style="left:26px;top:246px;width:371px;height:1px;background:#000"></div>
<div style="left:26px;top:266px;width:371px;height:1px;background:#000"></div>
<div style="left:26px;top:292px;width:371px;height:2px;background:#000"></div>
<div style="left:26px;top:313px;width:371px;height:1px;background:#000"></div>
<div style="left:26px;top:337px;width:371px;height:2px;background:#000"></div>
<div style="left:396px;top:225px;width:1px;height:114px;background:#000"></div>
<div style="left:301px;top:246px;width:1px;height:92px;background:#000"></div>
<div class="t" style="left:212px;top:229.48px;font-size:14.2px;line-height:14.2px;color:#fff;font-weight:bold;transform:translateX(-50%) scaleX(1.0);transform-origin:50% 0;">Parámetros</div>
<div class="t" style="left:40px;top:250.00px;font-size:13px;line-height:13px;color:#3f3151;font-weight:bold;transform:scaleX(0.85);transform-origin:0 0;">¿Tipo de jornada?</div>
<div class="t" style="left:40px;top:273.00px;font-size:13px;line-height:13px;color:#3f3151;font-weight:bold;transform:scaleX(0.835);transform-origin:0 0;">¿Afiliado al sindicato?</div>
<div class="t" style="left:40px;top:297.00px;font-size:13px;line-height:13px;color:#3f3151;font-weight:bold;transform:scaleX(0.865);transform-origin:0 0;">¿Trabajó el Día del Empleado de Comercio?</div>
<div class="t" style="left:40px;top:318.50px;font-size:13px;line-height:13px;color:#3f3151;font-weight:bold;transform:scaleX(0.83);transform-origin:0 0;">¿ Cálcula en Base 25?</div>
<div class="t" style="left:349px;top:249.45px;font-size:14px;line-height:14px;color:#000;font-weight:bold;transform:translateX(-50%) scaleX(0.87);transform-origin:50% 0;">Completa</div>
<div class="t" style="left:349px;top:273.15px;font-size:14px;line-height:14px;color:#000;font-weight:bold;transform:translateX(-50%) scaleX(0.87);transform-origin:50% 0;">No</div>
<div class="t" style="left:349px;top:296.55px;font-size:14px;line-height:14px;color:#000;font-weight:bold;transform:translateX(-50%) scaleX(0.87);transform-origin:50% 0;">Si</div>
<div class="t" style="left:349px;top:318.85px;font-size:14px;line-height:14px;color:#000;font-weight:bold;transform:translateX(-50%) scaleX(0.87);transform-origin:50% 0;">Si</div>
<div style="left:301px;top:246px;width:96px;height:21px;border:1px solid #fff;box-sizing:border-box"></div>
<div style="left:302px;top:247px;width:94px;height:19px;border:1px solid #0c1a2a;box-sizing:border-box"></div>
<div style="left:394px;top:264px;width:5px;height:5px;background:#000;box-shadow:0 0 0 1px #fff"></div>
<div style="left:397px;top:248px;width:17px;height:17px;border:1px solid #8eaad8;border-radius:2px;background:linear-gradient(#fbfbfb,#dcdcdc);box-sizing:border-box"></div>
<div style="left:402px;top:255px;width:0;height:0;border-left:3.5px solid transparent;border-right:3.5px solid transparent;border-top:4px solid #2d3f8a"></div>
<div style="left:999px;top:225px;width:389px;height:113px;background:#e4dfec;border:1px solid #3f3151;border-bottom:none;box-sizing:border-box"></div>
<div class="t" style="left:1014px;top:229.87px;font-size:14.8px;line-height:14.8px;color:#3f3151;font-weight:bold;">Planilla Sueldos</div>
<div class="t" style="left:1014px;top:249.07px;font-size:14.8px;line-height:14.8px;color:#3f3151;font-weight:bold;">Empleados de Comercio CCT 130/75</div>
<div class="t" style="left:1015px;top:275.97px;font-size:14.8px;line-height:14.8px;color:#3f3151;font-weight:bold;">Según acuerdo Abril 2014</div>
<div class="t" style="left:1014px;top:296.97px;font-size:14.8px;line-height:14.8px;color:#3f3151;font-weight:bold;">26 de Septiembre día del Empleado de Comercio</div>
<div style="left:26px;top:339px;width:1361px;height:97px;background:#5f497a"></div>
<div style="left:397px;top:338px;width:94px;height:1px;background:#5f497a"></div>
<div style="left:26px;top:337px;width:371px;height:2px;background:#000"></div>
<div style="left:491px;top:338px;width:897px;height:1px;background:#000"></div>
<div style="left:26px;top:436px;width:1362px;height:1px;background:#000"></div>
<div style="left:301px;top:372px;width:1087px;height:1px;background:#000"></div>
<div style="left:648px;top:404px;width:162px;height:1px;background:#000"></div>
<div style="left:810px;top:404px;width:578px;height:1px;background:#000"></div>
<div style="left:185px;top:338px;width:1px;height:98px;background:#000"></div>
<div style="left:268px;top:338px;width:1px;height:98px;background:#000"></div>
<div style="left:301px;top:338px;width:1px;height:98px;background:#000"></div>
<div style="left:1387px;top:338px;width:1px;height:99px;background:#000"></div>
<div style="left:396px;top:372px;width:1px;height:64px;background:#000"></div>
<div style="left:491px;top:372px;width:1px;height:64px;background:#000"></div>
<div style="left:565px;top:372px;width:1px;height:64px;background:#000"></div>
<div style="left:648px;top:372px;width:1px;height:64px;background:#000"></div>
<div style="left:810px;top:372px;width:1px;height:64px;background:#000"></div>
<div style="left:878px;top:372px;width:1px;height:64px;background:#000"></div>
<div style="left:939px;top:372px;width:1px;height:64px;background:#000"></div>
<div style="left:999px;top:372px;width:1px;height:64px;background:#000"></div>
<div style="left:1057px;top:372px;width:1px;height:64px;background:#000"></div>
<div style="left:1115px;top:372px;width:1px;height:64px;background:#000"></div>
<div style="left:1171px;top:372px;width:1px;height:64px;background:#000"></div>
<div style="left:1224px;top:372px;width:1px;height:64px;background:#000"></div>
<div style="left:1302px;top:372px;width:1px;height:64px;background:#000"></div>
<div style="left:729px;top:404px;width:1px;height:32px;background:#000"></div>
<div class="t" style="left:105px;top:381.84px;font-size:12px;line-height:12px;color:#f4f2f7;transform:translateX(-50%) scaleX(1.0);transform-origin:50% 0;">Categorías</div>
<div class="t" style="left:226.5px;top:364.50px;font-size:12.4px;line-height:12.4px;color:#f4f2f7;transform:translateX(-50%) scaleX(1.0);transform-origin:50% 0;">Básicos</div>
<div class="t" style="left:226.5px;top:381.50px;font-size:12.4px;line-height:12.4px;color:#f4f2f7;transform:translateX(-50%) scaleX(1.0);transform-origin:50% 0;">Jornada</div>
<div class="t" style="left:226.5px;top:398.50px;font-size:12.4px;line-height:12.4px;color:#f4f2f7;transform:translateX(-50%) scaleX(1.0);transform-origin:50% 0;">Completa</div>
<div class="t" style="left:276.5px;top:341.14px;font-size:12px;line-height:12px;color:#f4f2f7;transform:translateX(-50%) scaleX(1.0);transform-origin:50% 0;">A</div>
<div class="t" style="left:276.5px;top:356.74px;font-size:12px;line-height:12px;color:#f4f2f7;transform:translateX(-50%) scaleX(1.0);transform-origin:50% 0;">n</div>
<div class="t" style="left:276.5px;top:372.34px;font-size:12px;line-height:12px;color:#f4f2f7;transform:translateX(-50%) scaleX(1.0);transform-origin:50% 0;">t</div>
<div class="t" style="left:276.5px;top:387.94px;font-size:12px;line-height:12px;color:#f4f2f7;transform:translateX(-50%) scaleX(1.0);transform-origin:50% 0;">i</div>
<div class="t" style="left:276.5px;top:403.54px;font-size:12px;line-height:12px;color:#f4f2f7;transform:translateX(-50%) scaleX(1.0);transform-origin:50% 0;">g</div>
<div class="t" style="left:276.5px;top:419.14px;font-size:12px;line-height:12px;color:#f4f2f7;transform:translateX(-50%) scaleX(1.0);transform-origin:50% 0;">ü</div>
<div class="t" style="left:292.5px;top:356.34px;font-size:12px;line-height:12px;color:#f4f2f7;transform:translateX(-50%) scaleX(1.0);transform-origin:50% 0;">e</div>
<div class="t" style="left:292.5px;top:371.94px;font-size:12px;line-height:12px;color:#f4f2f7;transform:translateX(-50%) scaleX(1.0);transform-origin:50% 0;">d</div>
<div class="t" style="left:292.5px;top:387.54px;font-size:12px;line-height:12px;color:#f4f2f7;transform:translateX(-50%) scaleX(1.0);transform-origin:50% 0;">a</div>
<div class="t" style="left:292.5px;top:403.14px;font-size:12px;line-height:12px;color:#f4f2f7;transform:translateX(-50%) scaleX(1.0);transform-origin:50% 0;">d</div>
<div class="t" style="left:843.5px;top:349.13px;font-size:12.6px;line-height:12.6px;color:#f4f2f7;transform:translateX(-50%) scaleX(1.0);transform-origin:50% 0;">REMUNERATIVO</div>
<div class="t" style="left:348.5px;top:388.00px;font-size:13px;line-height:13px;color:#f4f2f7;transform:translateX(-50%) scaleX(1.0);transform-origin:50% 0;">Básico según</div>
<div class="t" style="left:348.5px;top:408.00px;font-size:13px;line-height:13px;color:#f4f2f7;transform:translateX(-50%) scaleX(1.0);transform-origin:50% 0;">Jornada</div>
<div class="t" style="left:443.5px;top:387.74px;font-size:13.3px;line-height:13.3px;color:#f4f2f7;transform:translateX(-50%) scaleX(1.0);transform-origin:50% 0;">Ausencia Día</div>
<div class="t" style="left:443.5px;top:407.74px;font-size:13.3px;line-height:13.3px;color:#f4f2f7;transform:translateX(-50%) scaleX(1.0);transform-origin:50% 0;">Emp Comercio</div>
<div class="t" style="left:528px;top:377.34px;font-size:13.3px;line-height:13.3px;color:#f4f2f7;transform:translateX(-50%) scaleX(1.0);transform-origin:50% 0;">Pago Día</div>
<div class="t" style="left:528px;top:397.74px;font-size:13.3px;line-height:13.3px;color:#f4f2f7;transform:translateX(-50%) scaleX(1.0);transform-origin:50% 0;">Emp</div>
<div class="t" style="left:528px;top:417.24px;font-size:13.3px;line-height:13.3px;color:#f4f2f7;transform:translateX(-50%) scaleX(1.0);transform-origin:50% 0;">Comercio</div>
<div class="t" style="left:606.5px;top:377.34px;font-size:13.3px;line-height:13.3px;color:#f4f2f7;transform:translateX(-50%) scaleX(1.0);transform-origin:50% 0;">Día Emp</div>
<div class="t" style="left:606.5px;top:397.74px;font-size:13.3px;line-height:13.3px;color:#f4f2f7;transform:translateX(-50%) scaleX(1.0);transform-origin:50% 0;">Comercio</div>
<div class="t" style="left:606.5px;top:417.24px;font-size:13.3px;line-height:13.3px;color:#f4f2f7;transform:translateX(-50%) scaleX(1.0);transform-origin:50% 0;">Trabajado</div>
<div class="t" style="left:729px;top:381.23px;font-size:13.9px;line-height:13.9px;color:#f4f2f7;transform:translateX(-50%) scaleX(1.0);transform-origin:50% 0;">Adicionales</div>
<div class="t" style="left:688.5px;top:414.67px;font-size:12.2px;line-height:12.2px;color:#f4f2f7;transform:translateX(-50%) scaleX(1.0);transform-origin:50% 0;">Antigüedad</div>
<div class="t" style="left:769.5px;top:414.67px;font-size:12.2px;line-height:12.2px;color:#f4f2f7;transform:translateX(-50%) scaleX(1.0);transform-origin:50% 0;">Presentismo</div>
<div class="t" style="left:844px;top:414.67px;font-size:12.2px;line-height:12.2px;color:#f4f2f7;transform:translateX(-50%) scaleX(1.0);transform-origin:50% 0;">Bruto</div>
<div class="t" style="left:908.5px;top:383.06px;font-size:10.8px;line-height:10.8px;color:#f4f2f7;transform:translateX(-50%) scaleX(1.0);transform-origin:50% 0;">Jubilación</div>
<div class="t" style="left:908.5px;top:414.67px;font-size:12.2px;line-height:12.2px;color:#f4f2f7;transform:translateX(-50%) scaleX(1.0);transform-origin:50% 0;">11%</div>
<div class="t" style="left:969px;top:374.67px;font-size:12.2px;line-height:12.2px;color:#f4f2f7;transform:translateX(-50%) scaleX(1.0);transform-origin:50% 0;">Obra</div>
<div class="t" style="left:969px;top:390.47px;font-size:12.2px;line-height:12.2px;color:#f4f2f7;transform:translateX(-50%) scaleX(1.0);transform-origin:50% 0;">Social</div>
<div class="t" style="left:969px;top:414.67px;font-size:12.2px;line-height:12.2px;color:#f4f2f7;transform:translateX(-50%) scaleX(1.0);transform-origin:50% 0;">3%</div>
<div class="t" style="left:1028px;top:384.16px;font-size:10.8px;line-height:10.8px;color:#f4f2f7;transform:translateX(-50%) scaleX(1.0);transform-origin:50% 0;">Ley 19.032</div>
<div class="t" style="left:1028px;top:414.67px;font-size:12.2px;line-height:12.2px;color:#f4f2f7;transform:translateX(-50%) scaleX(1.0);transform-origin:50% 0;">3%</div>
<div class="t" style="left:1086px;top:384.16px;font-size:10.8px;line-height:10.8px;color:#f4f2f7;transform:translateX(-50%) scaleX(1.0);transform-origin:50% 0;">SEC</div>
<div class="t" style="left:1086px;top:414.67px;font-size:12.2px;line-height:12.2px;color:#f4f2f7;transform:translateX(-50%) scaleX(1.0);transform-origin:50% 0;">2%</div>
<div class="t" style="left:1143.5px;top:384.16px;font-size:10.8px;line-height:10.8px;color:#f4f2f7;transform:translateX(-50%) scaleX(0.87);transform-origin:50% 0;">FAECYS</div>
<div class="t" style="left:1143.5px;top:414.67px;font-size:12.2px;line-height:12.2px;color:#f4f2f7;transform:translateX(-50%) scaleX(1.0);transform-origin:50% 0;">0,50%</div>
<div class="t" style="left:1198px;top:376.66px;font-size:10.8px;line-height:10.8px;color:#f4f2f7;transform:translateX(-50%) scaleX(1.0);transform-origin:50% 0;">SEC</div>
<div class="t" style="left:1198px;top:390.13px;font-size:13.2px;line-height:13.2px;color:#f4f2f7;transform:translateX(-50%) scaleX(1.0);transform-origin:50% 0;">Afiliado</div>
<div class="t" style="left:1198px;top:414.67px;font-size:12.2px;line-height:12.2px;color:#f4f2f7;transform:translateX(-50%) scaleX(1.0);transform-origin:50% 0;">2%</div>
<div class="t" style="left:1263.5px;top:382.24px;font-size:14.6px;line-height:14.6px;color:#f4f2f7;transform:translateX(-50%) scaleX(1.0);transform-origin:50% 0;">Total</div>
<div class="t" style="left:1263.5px;top:414.84px;font-size:12px;line-height:12px;color:#f4f2f7;transform:translateX(-50%) scaleX(1.0);transform-origin:50% 0;">Descuentos</div>
<div class="t" style="left:1344.5px;top:381.73px;font-size:15.2px;line-height:15.2px;color:#f4f2f7;transform:translateX(-50%) scaleX(1.0);transform-origin:50% 0;">total</div>
<div class="t" style="left:1344.5px;top:414.59px;font-size:12.3px;line-height:12.3px;color:#f4f2f7;transform:translateX(-50%) scaleX(1.0);transform-origin:50% 0;">Remunerativo</div>
<div style="left:269px;top:440px;width:32px;height:20px;background:#fde9d9"></div>
<div class="t" style="left:29px;top:445.84px;font-size:12px;line-height:12px;color:#000;">1. Maestranza A</div>
<div class="t" style="left:191px;top:444.83px;font-size:13.2px;line-height:13.2px;color:#000;">$</div>
<div class="t" style="left:263px;top:444.83px;font-size:13.2px;line-height:13.2px;color:#000;transform:translateX(-100%) scaleX(1.0);transform-origin:100% 0;">8.468,35</div>
<div class="t" style="left:285px;top:445.67px;font-size:12.2px;line-height:12.2px;color:#000;font-weight:bold;transform:translateX(-50%) scaleX(1.05);transform-origin:50% 0;">0</div>
<div class="t" style="left:390.5px;top:445.59px;font-size:12.3px;line-height:12.3px;color:#000;transform:translateX(-100%) scaleX(1.0);transform-origin:100% 0;">8.468,35</div>
<div class="t" style="left:485.5px;top:445.59px;font-size:12.3px;line-height:12.3px;color:#000;transform:translateX(-100%) scaleX(1.0);transform-origin:100% 0;">-282,28</div>
<div class="t" style="left:559.5px;top:445.59px;font-size:12.3px;line-height:12.3px;color:#000;transform:translateX(-100%) scaleX(1.0);transform-origin:100% 0;">338,73</div>
<div class="t" style="left:642.5px;top:445.59px;font-size:12.3px;line-height:12.3px;color:#000;transform:translateX(-100%) scaleX(1.0);transform-origin:100% 0;">282,28</div>
<div class="t" style="left:804.5px;top:445.59px;font-size:12.3px;line-height:12.3px;color:#000;transform:translateX(-100%) scaleX(1.0);transform-origin:100% 0;">733,92</div>
<div class="t" style="left:933.5px;top:445.59px;font-size:12.3px;line-height:12.3px;color:#000;transform:translateX(-100%) scaleX(1.0);transform-origin:100% 0;">1.049,51</div>
<div class="t" style="left:993.5px;top:445.59px;font-size:12.3px;line-height:12.3px;color:#000;transform:translateX(-100%) scaleX(1.0);transform-origin:100% 0;">286,23</div>
<div class="t" style="left:1051.5px;top:445.59px;font-size:12.3px;line-height:12.3px;color:#000;transform:translateX(-100%) scaleX(1.0);transform-origin:100% 0;">286,23</div>
<div class="t" style="left:1109.5px;top:445.59px;font-size:12.3px;line-height:12.3px;color:#000;transform:translateX(-100%) scaleX(1.0);transform-origin:100% 0;">190,82</div>
<div class="t" style="left:1165.5px;top:445.59px;font-size:12.3px;line-height:12.3px;color:#000;transform:translateX(-100%) scaleX(1.0);transform-origin:100% 0;">47,71</div>
<div class="t" style="left:872.5px;top:445.84px;font-size:12px;line-height:12px;color:#000;font-weight:bold;transform:translateX(-100%) scaleX(1.0);transform-origin:100% 0;">9.541,01</div>
<div class="t" style="left:708px;top:445.59px;font-size:12.3px;line-height:12.3px;color:#000;transform:translateX(-50%) scaleX(1.0);transform-origin:50% 0;">-</div>
<div class="t" style="left:1203px;top:445.59px;font-size:12.3px;line-height:12.3px;color:#000;transform:translateX(-50%) scaleX(1.0);transform-origin:50% 0;">-</div>
<div class="t" style="left:1296.5px;top:445.84px;font-size:12px;line-height:12px;color:#000;font-weight:bold;transform:translateX(-100%) scaleX(1.0);transform-origin:100% 0;">1.860,50</div>
<div class="t" style="left:1380px;top:444.15px;font-size:14px;line-height:14px;color:#000;transform:translateX(-100%) scaleX(1.0);transform-origin:100% 0;">7.680,51</div>
<div style="left:26px;top:460px;width:1361px;height:20px;background:#ccccff"></div>
<div style="left:269px;top:460px;width:32px;height:20px;background:#fde9d9"></div>
<div class="t" style="left:28.5px;top:464.83px;font-size:13.2px;line-height:13.2px;color:#000;transform:scaleX(1.035);transform-origin:0 0;">2. Maestranza B</div>
<div class="t" style="left:191px;top:464.83px;font-size:13.2px;line-height:13.2px;color:#000;">$</div>
<div class="t" style="left:263px;top:464.83px;font-size:13.2px;line-height:13.2px;color:#000;transform:translateX(-100%) scaleX(1.0);transform-origin:100% 0;">8.500,41</div>
<div class="t" style="left:285px;top:465.67px;font-size:12.2px;line-height:12.2px;color:#000;font-weight:bold;transform:translateX(-50%) scaleX(1.05);transform-origin:50% 0;">0</div>
<div class="t" style="left:390.5px;top:465.59px;font-size:12.3px;line-height:12.3px;color:#000;transform:translateX(-100%) scaleX(1.0);transform-origin:100% 0;">8.500,41</div>
<div class="t" style="left:485.5px;top:465.59px;font-size:12.3px;line-height:12.3px;color:#000;transform:translateX(-100%) scaleX(1.0);transform-origin:100% 0;">-283,35</div>
<div class="t" style="left:559.5px;top:465.59px;font-size:12.3px;line-height:12.3px;color:#000;transform:translateX(-100%) scaleX(1.0);transform-origin:100% 0;">340,02</div>
<div class="t" style="left:642.5px;top:465.59px;font-size:12.3px;line-height:12.3px;color:#000;transform:translateX(-100%) scaleX(1.0);transform-origin:100% 0;">283,35</div>
<div class="t" style="left:804.5px;top:465.59px;font-size:12.3px;line-height:12.3px;color:#000;transform:translateX(-100%) scaleX(1.0);transform-origin:100% 0;">736,70</div>
<div class="t" style="left:933.5px;top:465.59px;font-size:12.3px;line-height:12.3px;color:#000;transform:translateX(-100%) scaleX(1.0);transform-origin:100% 0;">1.053,48</div>
<div class="t" style="left:993.5px;top:465.59px;font-size:12.3px;line-height:12.3px;color:#000;transform:translateX(-100%) scaleX(1.0);transform-origin:100% 0;">287,31</div>
<div class="t" style="left:1051.5px;top:465.59px;font-size:12.3px;line-height:12.3px;color:#000;transform:translateX(-100%) scaleX(1.0);transform-origin:100% 0;">287,31</div>
<div class="t" style="left:1109.5px;top:465.59px;font-size:12.3px;line-height:12.3px;color:#000;transform:translateX(-100%) scaleX(1.0);transform-origin:100% 0;">191,54</div>
<div class="t" style="left:1165.5px;top:465.59px;font-size:12.3px;line-height:12.3px;color:#000;transform:translateX(-100%) scaleX(1.0);transform-origin:100% 0;">47,89</div>
<div class="t" style="left:872.5px;top:465.84px;font-size:12px;line-height:12px;color:#000;font-weight:bold;transform:translateX(-100%) scaleX(1.0);transform-origin:100% 0;">9.577,13</div>
<div class="t" style="left:708px;top:465.59px;font-size:12.3px;line-height:12.3px;color:#000;transform:translateX(-50%) scaleX(1.0);transform-origin:50% 0;">-</div>
<div class="t" style="left:1203px;top:465.59px;font-size:12.3px;line-height:12.3px;color:#000;transform:translateX(-50%) scaleX(1.0);transform-origin:50% 0;">-</div>
<div class="t" style="left:1296.5px;top:465.59px;font-size:12.3px;line-height:12.3px;color:#000;transform:translateX(-100%) scaleX(1.0);transform-origin:100% 0;">1.867,54</div>
<div class="t" style="left:1380px;top:464.15px;font-size:14px;line-height:14px;color:#000;transform:translateX(-100%) scaleX(1.0);transform-origin:100% 0;">7.709,59</div>
<div style="left:269px;top:480px;width:32px;height:20px;background:#fde9d9"></div>
<div class="t" style="left:29px;top:485.84px;font-size:12px;line-height:12px;color:#000;">3. Maestranza C</div>
<div class="t" style="left:191px;top:484.83px;font-size:13.2px;line-height:13.2px;color:#000;">$</div>
<div class="t" style="left:263px;top:484.83px;font-size:13.2px;line-height:13.2px;color:#000;transform:translateX(-100%) scaleX(1.0);transform-origin:100% 0;">8.612,74</div>
<div class="t" style="left:285px;top:485.67px;font-size:12.2px;line-height:12.2px;color:#000;font-weight:bold;transform:translateX(-50%) scaleX(1.05);transform-origin:50% 0;">0</div>
<div class="t" style="left:390.5px;top:485.59px;font-size:12.3px;line-height:12.3px;color:#000;transform:translateX(-100%) scaleX(1.0);transform-origin:100% 0;">8.612,74</div>
<div class="t" style="left:485.5px;top:485.59px;font-size:12.3px;line-height:12.3px;color:#000;transform:translateX(-100%) scaleX(1.0);transform-origin:100% 0;">-287,09</div>
<div class="t" style="left:559.5px;top:485.59px;font-size:12.3px;line-height:12.3px;color:#000;transform:translateX(-100%) scaleX(1.0);transform-origin:100% 0;">344,51</div>
<div class="t" style="left:642.5px;top:485.59px;font-size:12.3px;line-height:12.3px;color:#000;transform:translateX(-100%) scaleX(1.0);transform-origin:100% 0;">287,09</div>
<div class="t" style="left:804.5px;top:485.59px;font-size:12.3px;line-height:12.3px;color:#000;transform:translateX(-100%) scaleX(1.0);transform-origin:100% 0;">746,44</div>
<div class="t" style="left:933.5px;top:485.59px;font-size:12.3px;line-height:12.3px;color:#000;transform:translateX(-100%) scaleX(1.0);transform-origin:100% 0;">1.067,41</div>
<div class="t" style="left:993.5px;top:485.59px;font-size:12.3px;line-height:12.3px;color:#000;transform:translateX(-100%) scaleX(1.0);transform-origin:100% 0;">291,11</div>
<div class="t" style="left:1051.5px;top:485.59px;font-size:12.3px;line-height:12.3px;color:#000;transform:translateX(-100%) scaleX(1.0);transform-origin:100% 0;">291,11</div>
<div class="t" style="left:1109.5px;top:485.59px;font-size:12.3px;line-height:12.3px;color:#000;transform:translateX(-100%) scaleX(1.0);transform-origin:100% 0;">194,07</div>
<div class="t" style="left:1165.5px;top:485.59px;font-size:12.3px;line-height:12.3px;color:#000;transform:translateX(-100%) scaleX(1.0);transform-origin:100% 0;">48,52</div>
<div class="t" style="left:872.5px;top:485.84px;font-size:12px;line-height:12px;color:#000;font-weight:bold;transform:translateX(-100%) scaleX(1.0);transform-origin:100% 0;">9.703,69</div>
<div class="t" style="left:708px;top:485.59px;font-size:12.3px;line-height:12.3px;color:#000;transform:translateX(-50%) scaleX(1.0);transform-origin:50% 0;">-</div>
<div class="t" style="left:1203px;top:485.59px;font-size:12.3px;line-height:12.3px;color:#000;transform:translateX(-50%) scaleX(1.0);transform-origin:50% 0;">-</div>
<div class="t" style="left:1296.5px;top:485.84px;font-size:12px;line-height:12px;color:#000;font-weight:bold;transform:translateX(-100%) scaleX(1.0);transform-origin:100% 0;">1.892,22</div>
<div class="t" style="left:1380px;top:484.15px;font-size:14px;line-height:14px;color:#000;transform:translateX(-100%) scaleX(1.0);transform-origin:100% 0;">7.811,47</div>
<div style="left:26px;top:500px;width:1361px;height:20px;background:#ccccff"></div>
<div style="left:269px;top:500px;width:32px;height:20px;background:#fde9d9"></div>
<div class="t" style="left:28.5px;top:504.83px;font-size:13.2px;line-height:13.2px;color:#000;transform:scaleX(1.035);transform-origin:0 0;">4. Administrativo A</div>
<div class="t" style="left:191px;top:504.83px;font-size:13.2px;line-height:13.2px;color:#000;">$</div>
<div class="t" style="left:263px;top:504.83px;font-size:13.2px;line-height:13.2px;color:#000;transform:translateX(-100%) scaleX(1.0);transform-origin:100% 0;">8.588,66</div>
<div class="t" style="left:285px;top:505.67px;font-size:12.2px;line-height:12.2px;color:#000;font-weight:bold;transform:translateX(-50%) scaleX(1.05);transform-origin:50% 0;">0</div>
<div class="t" style="left:390.5px;top:505.59px;font-size:12.3px;line-height:12.3px;color:#000;transform:translateX(-100%) scaleX(1.0);transform-origin:100% 0;">8.588,66</div>
<div class="t" style="left:485.5px;top:505.59px;font-size:12.3px;line-height:12.3px;color:#000;transform:translateX(-100%) scaleX(1.0);transform-origin:100% 0;">-286,29</div>
<div class="t" style="left:559.5px;top:505.59px;font-size:12.3px;line-height:12.3px;color:#000;transform:translateX(-100%) scaleX(1.0);transform-origin:100% 0;">343,55</div>
<div class="t" style="left:642.5px;top:505.59px;font-size:12.3px;line-height:12.3px;color:#000;transform:translateX(-100%) scaleX(1.0);transform-origin:100% 0;">286,29</div>
<div class="t" style="left:804.5px;top:505.59px;font-size:12.3px;line-height:12.3px;color:#000;transform:translateX(-100%) scaleX(1.0);transform-origin:100% 0;">744,35</div>
<div class="t" style="left:933.5px;top:505.59px;font-size:12.3px;line-height:12.3px;color:#000;transform:translateX(-100%) scaleX(1.0);transform-origin:100% 0;">1.064,42</div>
<div class="t" style="left:993.5px;top:505.59px;font-size:12.3px;line-height:12.3px;color:#000;transform:translateX(-100%) scaleX(1.0);transform-origin:100% 0;">290,30</div>
<div class="t" style="left:1051.5px;top:505.59px;font-size:12.3px;line-height:12.3px;color:#000;transform:translateX(-100%) scaleX(1.0);transform-origin:100% 0;">290,30</div>
<div class="t" style="left:1109.5px;top:505.59px;font-size:12.3px;line-height:12.3px;color:#000;transform:translateX(-100%) scaleX(1.0);transform-origin:100% 0;">193,53</div>
<div class="t" style="left:1165.5px;top:505.59px;font-size:12.3px;line-height:12.3px;color:#000;transform:translateX(-100%) scaleX(1.0);transform-origin:100% 0;">48,38</div>
<div class="t" style="left:872.5px;top:505.84px;font-size:12px;line-height:12px;color:#000;font-weight:bold;transform:translateX(-100%) scaleX(1.0);transform-origin:100% 0;">9.676,56</div>
<div class="t" style="left:708px;top:505.59px;font-size:12.3px;line-height:12.3px;color:#000;transform:translateX(-50%) scaleX(1.0);transform-origin:50% 0;">-</div>
<div class="t" style="left:1203px;top:505.59px;font-size:12.3px;line-height:12.3px;color:#000;transform:translateX(-50%) scaleX(1.0);transform-origin:50% 0;">-</div>
<div class="t" style="left:1296.5px;top:505.59px;font-size:12.3px;line-height:12.3px;color:#000;transform:translateX(-100%) scaleX(1.0);transform-origin:100% 0;">1.886,93</div>
<div class="t" style="left:1380px;top:504.15px;font-size:14px;line-height:14px;color:#000;transform:translateX(-100%) scaleX(1.0);transform-origin:100% 0;">7.789,63</div>
<div style="left:269px;top:520px;width:32px;height:20px;background:#fde9d9"></div>
<div class="t" style="left:29px;top:525.84px;font-size:12px;line-height:12px;color:#000;">5. Administrativo B</div>
<div class="t" style="left:191px;top:524.83px;font-size:13.2px;line-height:13.2px;color:#000;">$</div>
<div class="t" style="left:263px;top:524.83px;font-size:13.2px;line-height:13.2px;color:#000;transform:translateX(-100%) scaleX(1.0);transform-origin:100% 0;">8.636,81</div>
<div class="t" style="left:285px;top:525.67px;font-size:12.2px;line-height:12.2px;color:#000;font-weight:bold;transform:translateX(-50%) scaleX(1.05);transform-origin:50% 0;">0</div>
<div class="t" style="left:390.5px;top:525.59px;font-size:12.3px;line-height:12.3px;color:#000;transform:translateX(-100%) scaleX(1.0);transform-origin:100% 0;">8.636,81</div>
<div class="t" style="left:485.5px;top:525.59px;font-size:12.3px;line-height:12.3px;color:#000;transform:translateX(-100%) scaleX(1.0);transform-origin:100% 0;">-287,89</div>
<div class="t" style="left:559.5px;top:525.59px;font-size:12.3px;line-height:12.3px;color:#000;transform:translateX(-100%) scaleX(1.0);transform-origin:100% 0;">345,47</div>
<div class="t" style="left:642.5px;top:525.59px;font-size:12.3px;line-height:12.3px;color:#000;transform:translateX(-100%) scaleX(1.0);transform-origin:100% 0;">287,89</div>
<div class="t" style="left:804.5px;top:525.59px;font-size:12.3px;line-height:12.3px;color:#000;transform:translateX(-100%) scaleX(1.0);transform-origin:100% 0;">748,52</div>
<div class="t" style="left:933.5px;top:525.59px;font-size:12.3px;line-height:12.3px;color:#000;transform:translateX(-100%) scaleX(1.0);transform-origin:100% 0;">1.070,39</div>
<div class="t" style="left:993.5px;top:525.59px;font-size:12.3px;line-height:12.3px;color:#000;transform:translateX(-100%) scaleX(1.0);transform-origin:100% 0;">291,92</div>
<div class="t" style="left:1051.5px;top:525.59px;font-size:12.3px;line-height:12.3px;color:#000;transform:translateX(-100%) scaleX(1.0);transform-origin:100% 0;">291,92</div>
<div class="t" style="left:1109.5px;top:525.59px;font-size:12.3px;line-height:12.3px;color:#000;transform:translateX(-100%) scaleX(1.0);transform-origin:100% 0;">194,62</div>
<div class="t" style="left:1165.5px;top:525.59px;font-size:12.3px;line-height:12.3px;color:#000;transform:translateX(-100%) scaleX(1.0);transform-origin:100% 0;">48,65</div>
<div class="t" style="left:872.5px;top:525.84px;font-size:12px;line-height:12px;color:#000;font-weight:bold;transform:translateX(-100%) scaleX(1.0);transform-origin:100% 0;">9.730,81</div>
<div class="t" style="left:708px;top:525.59px;font-size:12.3px;line-height:12.3px;color:#000;transform:translateX(-50%) scaleX(1.0);transform-origin:50% 0;">-</div>
<div class="t" style="left:1203px;top:525.59px;font-size:12.3px;line-height:12.3px;color:#000;transform:translateX(-50%) scaleX(1.0);transform-origin:50% 0;">-</div>
<div class="t" style="left:1296.5px;top:525.84px;font-size:12px;line-height:12px;color:#000;font-weight:bold;transform:translateX(-100%) scaleX(1.0);transform-origin:100% 0;">1.897,51</div>
<div class="t" style="left:1380px;top:524.15px;font-size:14px;line-height:14px;color:#000;transform:translateX(-100%) scaleX(1.0);transform-origin:100% 0;">7.833,30</div>
<div style="left:26px;top:540px;width:1361px;height:20px;background:#ccccff"></div>
<div style="left:269px;top:540px;width:32px;height:20px;background:#fde9d9"></div>
<div class="t" style="left:28.5px;top:544.83px;font-size:13.2px;line-height:13.2px;color:#000;transform:scaleX(1.035);transform-origin:0 0;">6. Administrativo C</div>
<div class="t" style="left:191px;top:544.83px;font-size:13.2px;line-height:13.2px;color:#000;">$</div>
<div class="t" style="left:263px;top:544.83px;font-size:13.2px;line-height:13.2px;color:#000;transform:translateX(-100%) scaleX(1.0);transform-origin:100% 0;">8.684,86</div>
<div class="t" style="left:285px;top:545.67px;font-size:12.2px;line-height:12.2px;color:#000;font-weight:bold;transform:translateX(-50%) scaleX(1.05);transform-origin:50% 0;">0</div>
<div class="t" style="left:390.5px;top:545.59px;font-size:12.3px;line-height:12.3px;color:#000;transform:translateX(-100%) scaleX(1.0);transform-origin:100% 0;">8.684,86</div>
<div class="t" style="left:485.5px;top:545.59px;font-size:12.3px;line-height:12.3px;color:#000;transform:translateX(-100%) scaleX(1.0);transform-origin:100% 0;">-289,50</div>
<div class="t" style="left:559.5px;top:545.59px;font-size:12.3px;line-height:12.3px;color:#000;transform:translateX(-100%) scaleX(1.0);transform-origin:100% 0;">347,39</div>
<div class="t" style="left:642.5px;top:545.59px;font-size:12.3px;line-height:12.3px;color:#000;transform:translateX(-100%) scaleX(1.0);transform-origin:100% 0;">289,50</div>
<div class="t" style="left:804.5px;top:545.59px;font-size:12.3px;line-height:12.3px;color:#000;transform:translateX(-100%) scaleX(1.0);transform-origin:100% 0;">752,69</div>
<div class="t" style="left:933.5px;top:545.59px;font-size:12.3px;line-height:12.3px;color:#000;transform:translateX(-100%) scaleX(1.0);transform-origin:100% 0;">1.076,34</div>
<div class="t" style="left:993.5px;top:545.59px;font-size:12.3px;line-height:12.3px;color:#000;transform:translateX(-100%) scaleX(1.0);transform-origin:100% 0;">293,55</div>
<div class="t" style="left:1051.5px;top:545.59px;font-size:12.3px;line-height:12.3px;color:#000;transform:translateX(-100%) scaleX(1.0);transform-origin:100% 0;">293,55</div>
<div class="t" style="left:1109.5px;top:545.59px;font-size:12.3px;line-height:12.3px;color:#000;transform:translateX(-100%) scaleX(1.0);transform-origin:100% 0;">195,70</div>
<div class="t" style="left:1165.5px;top:545.59px;font-size:12.3px;line-height:12.3px;color:#000;transform:translateX(-100%) scaleX(1.0);transform-origin:100% 0;">48,92</div>
<div class="t" style="left:872.5px;top:545.84px;font-size:12px;line-height:12px;color:#000;font-weight:bold;transform:translateX(-100%) scaleX(1.0);transform-origin:100% 0;">9.784,94</div>
<div class="t" style="left:708px;top:545.59px;font-size:12.3px;line-height:12.3px;color:#000;transform:translateX(-50%) scaleX(1.0);transform-origin:50% 0;">-</div>
<div class="t" style="left:1203px;top:545.59px;font-size:12.3px;line-height:12.3px;color:#000;transform:translateX(-50%) scaleX(1.0);transform-origin:50% 0;">-</div>
<div class="t" style="left:1296.5px;top:545.59px;font-size:12.3px;line-height:12.3px;color:#000;transform:translateX(-100%) scaleX(1.0);transform-origin:100% 0;">1.908,06</div>
<div class="t" style="left:1380px;top:544.15px;font-size:14px;line-height:14px;color:#000;transform:translateX(-100%) scaleX(1.0);transform-origin:100% 0;">7.876,88</div>
<div style="left:269px;top:560px;width:32px;height:20px;background:#fde9d9"></div>
<div class="t" style="left:29px;top:565.84px;font-size:12px;line-height:12px;color:#000;">7. Administrativo D</div>
<div class="t" style="left:191px;top:564.83px;font-size:13.2px;line-height:13.2px;color:#000;">$</div>
<div class="t" style="left:263px;top:564.83px;font-size:13.2px;line-height:13.2px;color:#000;transform:translateX(-100%) scaleX(1.0);transform-origin:100% 0;">8.829,29</div>
<div class="t" style="left:285px;top:565.67px;font-size:12.2px;line-height:12.2px;color:#000;font-weight:bold;transform:translateX(-50%) scaleX(1.05);transform-origin:50% 0;">0</div>
<div class="t" style="left:390.5px;top:565.59px;font-size:12.3px;line-height:12.3px;color:#000;transform:translateX(-100%) scaleX(1.0);transform-origin:100% 0;">8.829,29</div>
<div class="t" style="left:485.5px;top:565.59px;font-size:12.3px;line-height:12.3px;color:#000;transform:translateX(-100%) scaleX(1.0);transform-origin:100% 0;">-294,31</div>
<div class="t" style="left:559.5px;top:565.59px;font-size:12.3px;line-height:12.3px;color:#000;transform:translateX(-100%) scaleX(1.0);transform-origin:100% 0;">353,17</div>
<div class="t" style="left:642.5px;top:565.59px;font-size:12.3px;line-height:12.3px;color:#000;transform:translateX(-100%) scaleX(1.0);transform-origin:100% 0;">294,31</div>
<div class="t" style="left:804.5px;top:565.59px;font-size:12.3px;line-height:12.3px;color:#000;transform:translateX(-100%) scaleX(1.0);transform-origin:100% 0;">765,21</div>
<div class="t" style="left:933.5px;top:565.59px;font-size:12.3px;line-height:12.3px;color:#000;transform:translateX(-100%) scaleX(1.0);transform-origin:100% 0;">1.094,24</div>
<div class="t" style="left:993.5px;top:565.59px;font-size:12.3px;line-height:12.3px;color:#000;transform:translateX(-100%) scaleX(1.0);transform-origin:100% 0;">298,43</div>
<div class="t" style="left:1051.5px;top:565.59px;font-size:12.3px;line-height:12.3px;color:#000;transform:translateX(-100%) scaleX(1.0);transform-origin:100% 0;">298,43</div>
<div class="t" style="left:1109.5px;top:565.59px;font-size:12.3px;line-height:12.3px;color:#000;transform:translateX(-100%) scaleX(1.0);transform-origin:100% 0;">198,95</div>
<div class="t" style="left:1165.5px;top:565.59px;font-size:12.3px;line-height:12.3px;color:#000;transform:translateX(-100%) scaleX(1.0);transform-origin:100% 0;">49,74</div>
<div class="t" style="left:872.5px;top:565.84px;font-size:12px;line-height:12px;color:#000;font-weight:bold;transform:translateX(-100%) scaleX(1.0);transform-origin:100% 0;">9.947,67</div>
<div class="t" style="left:708px;top:565.59px;font-size:12.3px;line-height:12.3px;color:#000;transform:translateX(-50%) scaleX(1.0);transform-origin:50% 0;">-</div>
<div class="t" style="left:1203px;top:565.59px;font-size:12.3px;line-height:12.3px;color:#000;transform:translateX(-50%) scaleX(1.0);transform-origin:50% 0;">-</div>
<div class="t" style="left:1296.5px;top:565.84px;font-size:12px;line-height:12px;color:#000;font-weight:bold;transform:translateX(-100%) scaleX(1.0);transform-origin:100% 0;">1.939,80</div>
<div class="t" style="left:1380px;top:564.15px;font-size:14px;line-height:14px;color:#000;transform:translateX(-100%) scaleX(1.0);transform-origin:100% 0;">8.007,87</div>
<div style="left:26px;top:580px;width:1361px;height:20px;background:#ccccff"></div>
<div style="left:269px;top:580px;width:32px;height:20px;background:#fde9d9"></div>
<div class="t" style="left:28.5px;top:584.83px;font-size:13.2px;line-height:13.2px;color:#000;transform:scaleX(1.035);transform-origin:0 0;">8. Administrativo E</div>
<div class="t" style="left:191px;top:584.83px;font-size:13.2px;line-height:13.2px;color:#000;">$</div>
<div class="t" style="left:263px;top:584.83px;font-size:13.2px;line-height:13.2px;color:#000;transform:translateX(-100%) scaleX(1.0);transform-origin:100% 0;">8.949,63</div>
<div class="t" style="left:285px;top:585.67px;font-size:12.2px;line-height:12.2px;color:#000;font-weight:bold;transform:translateX(-50%) scaleX(1.05);transform-origin:50% 0;">0</div>
<div class="t" style="left:390.5px;top:585.59px;font-size:12.3px;line-height:12.3px;color:#000;transform:translateX(-100%) scaleX(1.0);transform-origin:100% 0;">8.949,63</div>
<div class="t" style="left:485.5px;top:585.59px;font-size:12.3px;line-height:12.3px;color:#000;transform:translateX(-100%) scaleX(1.0);transform-origin:100% 0;">-298,32</div>
<div class="t" style="left:559.5px;top:585.59px;font-size:12.3px;line-height:12.3px;color:#000;transform:translateX(-100%) scaleX(1.0);transform-origin:100% 0;">357,99</div>
<div class="t" style="left:642.5px;top:585.59px;font-size:12.3px;line-height:12.3px;color:#000;transform:translateX(-100%) scaleX(1.0);transform-origin:100% 0;">298,32</div>
<div class="t" style="left:804.5px;top:585.59px;font-size:12.3px;line-height:12.3px;color:#000;transform:translateX(-100%) scaleX(1.0);transform-origin:100% 0;">775,63</div>
<div class="t" style="left:933.5px;top:585.59px;font-size:12.3px;line-height:12.3px;color:#000;transform:translateX(-100%) scaleX(1.0);transform-origin:100% 0;">1.109,16</div>
<div class="t" style="left:993.5px;top:585.59px;font-size:12.3px;line-height:12.3px;color:#000;transform:translateX(-100%) scaleX(1.0);transform-origin:100% 0;">302,50</div>
<div class="t" style="left:1051.5px;top:585.59px;font-size:12.3px;line-height:12.3px;color:#000;transform:translateX(-100%) scaleX(1.0);transform-origin:100% 0;">302,50</div>
<div class="t" style="left:1109.5px;top:585.59px;font-size:12.3px;line-height:12.3px;color:#000;transform:translateX(-100%) scaleX(1.0);transform-origin:100% 0;">201,66</div>
<div class="t" style="left:1165.5px;top:585.59px;font-size:12.3px;line-height:12.3px;color:#000;transform:translateX(-100%) scaleX(1.0);transform-origin:100% 0;">50,42</div>
<div class="t" style="left:872.5px;top:585.84px;font-size:12px;line-height:12px;color:#000;font-weight:bold;transform:translateX(-100%) scaleX(1.0);transform-origin:100% 0;">10.083,25</div>
<div class="t" style="left:708px;top:585.59px;font-size:12.3px;line-height:12.3px;color:#000;transform:translateX(-50%) scaleX(1.0);transform-origin:50% 0;">-</div>
<div class="t" style="left:1203px;top:585.59px;font-size:12.3px;line-height:12.3px;color:#000;transform:translateX(-50%) scaleX(1.0);transform-origin:50% 0;">-</div>
<div class="t" style="left:1296.5px;top:585.59px;font-size:12.3px;line-height:12.3px;color:#000;transform:translateX(-100%) scaleX(1.0);transform-origin:100% 0;">1.966,23</div>
<div class="t" style="left:1380px;top:584.15px;font-size:14px;line-height:14px;color:#000;transform:translateX(-100%) scaleX(1.0);transform-origin:100% 0;">8.117,02</div>
<div style="left:269px;top:600px;width:32px;height:20px;background:#fde9d9"></div>
<div class="t" style="left:29px;top:605.84px;font-size:12px;line-height:12px;color:#000;">9. Administrativo F</div>
<div class="t" style="left:191px;top:604.83px;font-size:13.2px;line-height:13.2px;color:#000;">$</div>
<div class="t" style="left:263px;top:604.83px;font-size:13.2px;line-height:13.2px;color:#000;transform:translateX(-100%) scaleX(1.0);transform-origin:100% 0;">9.126,10</div>
<div class="t" style="left:285px;top:605.67px;font-size:12.2px;line-height:12.2px;color:#000;font-weight:bold;transform:translateX(-50%) scaleX(1.05);transform-origin:50% 0;">0</div>
<div class="t" style="left:390.5px;top:605.59px;font-size:12.3px;line-height:12.3px;color:#000;transform:translateX(-100%) scaleX(1.0);transform-origin:100% 0;">9.126,10</div>
<div class="t" style="left:485.5px;top:605.59px;font-size:12.3px;line-height:12.3px;color:#000;transform:translateX(-100%) scaleX(1.0);transform-origin:100% 0;">-304,20</div>
<div class="t" style="left:559.5px;top:605.59px;font-size:12.3px;line-height:12.3px;color:#000;transform:translateX(-100%) scaleX(1.0);transform-origin:100% 0;">365,04</div>
<div class="t" style="left:642.5px;top:605.59px;font-size:12.3px;line-height:12.3px;color:#000;transform:translateX(-100%) scaleX(1.0);transform-origin:100% 0;">304,20</div>
<div class="t" style="left:804.5px;top:605.59px;font-size:12.3px;line-height:12.3px;color:#000;transform:translateX(-100%) scaleX(1.0);transform-origin:100% 0;">790,93</div>
<div class="t" style="left:933.5px;top:605.59px;font-size:12.3px;line-height:12.3px;color:#000;transform:translateX(-100%) scaleX(1.0);transform-origin:100% 0;">1.131,03</div>
<div class="t" style="left:993.5px;top:605.59px;font-size:12.3px;line-height:12.3px;color:#000;transform:translateX(-100%) scaleX(1.0);transform-origin:100% 0;">308,46</div>
<div class="t" style="left:1051.5px;top:605.59px;font-size:12.3px;line-height:12.3px;color:#000;transform:translateX(-100%) scaleX(1.0);transform-origin:100% 0;">308,46</div>
<div class="t" style="left:1109.5px;top:605.59px;font-size:12.3px;line-height:12.3px;color:#000;transform:translateX(-100%) scaleX(1.0);transform-origin:100% 0;">205,64</div>
<div class="t" style="left:1165.5px;top:605.59px;font-size:12.3px;line-height:12.3px;color:#000;transform:translateX(-100%) scaleX(1.0);transform-origin:100% 0;">51,41</div>
<div class="t" style="left:872.5px;top:605.84px;font-size:12px;line-height:12px;color:#000;font-weight:bold;transform:translateX(-100%) scaleX(1.0);transform-origin:100% 0;">10.282,07</div>
<div class="t" style="left:708px;top:605.59px;font-size:12.3px;line-height:12.3px;color:#000;transform:translateX(-50%) scaleX(1.0);transform-origin:50% 0;">-</div>
<div class="t" style="left:1203px;top:605.59px;font-size:12.3px;line-height:12.3px;color:#000;transform:translateX(-50%) scaleX(1.0);transform-origin:50% 0;">-</div>
<div class="t" style="left:1296.5px;top:605.84px;font-size:12px;line-height:12px;color:#000;font-weight:bold;transform:translateX(-100%) scaleX(1.0);transform-origin:100% 0;">2.005,00</div>
<div class="t" style="left:1380px;top:604.15px;font-size:14px;line-height:14px;color:#000;transform:translateX(-100%) scaleX(1.0);transform-origin:100% 0;">8.277,07</div>
<div style="left:26px;top:620px;width:1361px;height:20px;background:#ccccff"></div>
<div style="left:269px;top:620px;width:32px;height:20px;background:#fde9d9"></div>
<div class="t" style="left:28.5px;top:624.83px;font-size:13.2px;line-height:13.2px;color:#000;transform:scaleX(1.035);transform-origin:0 0;">10. Cajeros A</div>
<div class="t" style="left:191px;top:624.83px;font-size:13.2px;line-height:13.2px;color:#000;">$</div>
<div class="t" style="left:263px;top:624.83px;font-size:13.2px;line-height:13.2px;color:#000;transform:translateX(-100%) scaleX(1.0);transform-origin:100% 0;">8.628,75</div>
<div class="t" style="left:285px;top:625.67px;font-size:12.2px;line-height:12.2px;color:#000;font-weight:bold;transform:translateX(-50%) scaleX(1.05);transform-origin:50% 0;">0</div>
<div class="t" style="left:390.5px;top:625.59px;font-size:12.3px;line-height:12.3px;color:#000;transform:translateX(-100%) scaleX(1.0);transform-origin:100% 0;">8.628,75</div>
<div class="t" style="left:485.5px;top:625.59px;font-size:12.3px;line-height:12.3px;color:#000;transform:translateX(-100%) scaleX(1.0);transform-origin:100% 0;">-287,63</div>
<div class="t" style="left:559.5px;top:625.59px;font-size:12.3px;line-height:12.3px;color:#000;transform:translateX(-100%) scaleX(1.0);transform-origin:100% 0;">345,15</div>
<div class="t" style="left:642.5px;top:625.59px;font-size:12.3px;line-height:12.3px;color:#000;transform:translateX(-100%) scaleX(1.0);transform-origin:100% 0;">287,63</div>
<div class="t" style="left:804.5px;top:625.59px;font-size:12.3px;line-height:12.3px;color:#000;transform:translateX(-100%) scaleX(1.0);transform-origin:100% 0;">747,83</div>
<div class="t" style="left:933.5px;top:625.59px;font-size:12.3px;line-height:12.3px;color:#000;transform:translateX(-100%) scaleX(1.0);transform-origin:100% 0;">1.069,39</div>
<div class="t" style="left:993.5px;top:625.59px;font-size:12.3px;line-height:12.3px;color:#000;transform:translateX(-100%) scaleX(1.0);transform-origin:100% 0;">291,65</div>
<div class="t" style="left:1051.5px;top:625.59px;font-size:12.3px;line-height:12.3px;color:#000;transform:translateX(-100%) scaleX(1.0);transform-origin:100% 0;">291,65</div>
<div class="t" style="left:1109.5px;top:625.59px;font-size:12.3px;line-height:12.3px;color:#000;transform:translateX(-100%) scaleX(1.0);transform-origin:100% 0;">194,43</div>
<div class="t" style="left:1165.5px;top:625.59px;font-size:12.3px;line-height:12.3px;color:#000;transform:translateX(-100%) scaleX(1.0);transform-origin:100% 0;">48,61</div>
<div class="t" style="left:872.5px;top:625.84px;font-size:12px;line-height:12px;color:#000;font-weight:bold;transform:translateX(-100%) scaleX(1.0);transform-origin:100% 0;">9.721,73</div>
<div class="t" style="left:708px;top:625.59px;font-size:12.3px;line-height:12.3px;color:#000;transform:translateX(-50%) scaleX(1.0);transform-origin:50% 0;">-</div>
<div class="t" style="left:1203px;top:625.59px;font-size:12.3px;line-height:12.3px;color:#000;transform:translateX(-50%) scaleX(1.0);transform-origin:50% 0;">-</div>
<div class="t" style="left:1296.5px;top:625.59px;font-size:12.3px;line-height:12.3px;color:#000;transform:translateX(-100%) scaleX(1.0);transform-origin:100% 0;">1.895,74</div>
<div class="t" style="left:1380px;top:624.15px;font-size:14px;line-height:14px;color:#000;transform:translateX(-100%) scaleX(1.0);transform-origin:100% 0;">7.825,99</div>
<div style="left:269px;top:640px;width:32px;height:20px;background:#fde9d9"></div>
<div class="t" style="left:29px;top:645.84px;font-size:12px;line-height:12px;color:#000;">11. Cajeros B</div>
<div class="t" style="left:191px;top:644.83px;font-size:13.2px;line-height:13.2px;color:#000;">$</div>
<div class="t" style="left:263px;top:644.83px;font-size:13.2px;line-height:13.2px;color:#000;transform:translateX(-100%) scaleX(1.0);transform-origin:100% 0;">8.684,86</div>
<div class="t" style="left:285px;top:645.67px;font-size:12.2px;line-height:12.2px;color:#000;font-weight:bold;transform:translateX(-50%) scaleX(1.05);transform-origin:50% 0;">0</div>
<div class="t" style="left:390.5px;top:645.59px;font-size:12.3px;line-height:12.3px;color:#000;transform:translateX(-100%) scaleX(1.0);transform-origin:100% 0;">8.684,86</div>
<div class="t" style="left:485.5px;top:645.59px;font-size:12.3px;line-height:12.3px;color:#000;transform:translateX(-100%) scaleX(1.0);transform-origin:100% 0;">-289,50</div>
<div class="t" style="left:559.5px;top:645.59px;font-size:12.3px;line-height:12.3px;color:#000;transform:translateX(-100%) scaleX(1.0);transform-origin:100% 0;">347,39</div>
<div class="t" style="left:642.5px;top:645.59px;font-size:12.3px;line-height:12.3px;color:#000;transform:translateX(-100%) scaleX(1.0);transform-origin:100% 0;">289,50</div>
<div class="t" style="left:804.5px;top:645.59px;font-size:12.3px;line-height:12.3px;color:#000;transform:translateX(-100%) scaleX(1.0);transform-origin:100% 0;">752,69</div>
<div class="t" style="left:933.5px;top:645.59px;font-size:12.3px;line-height:12.3px;color:#000;transform:translateX(-100%) scaleX(1.0);transform-origin:100% 0;">1.076,34</div>
<div class="t" style="left:993.5px;top:645.59px;font-size:12.3px;line-height:12.3px;color:#000;transform:translateX(-100%) scaleX(1.0);transform-origin:100% 0;">293,55</div>
<div class="t" style="left:1051.5px;top:645.59px;font-size:12.3px;line-height:12.3px;color:#000;transform:translateX(-100%) scaleX(1.0);transform-origin:100% 0;">293,55</div>
<div class="t" style="left:1109.5px;top:645.59px;font-size:12.3px;line-height:12.3px;color:#000;transform:translateX(-100%) scaleX(1.0);transform-origin:100% 0;">195,70</div>
<div class="t" style="left:1165.5px;top:645.59px;font-size:12.3px;line-height:12.3px;color:#000;transform:translateX(-100%) scaleX(1.0);transform-origin:100% 0;">48,92</div>
<div class="t" style="left:872.5px;top:645.84px;font-size:12px;line-height:12px;color:#000;font-weight:bold;transform:translateX(-100%) scaleX(1.0);transform-origin:100% 0;">9.784,94</div>
<div class="t" style="left:708px;top:645.59px;font-size:12.3px;line-height:12.3px;color:#000;transform:translateX(-50%) scaleX(1.0);transform-origin:50% 0;">-</div>
<div class="t" style="left:1203px;top:645.59px;font-size:12.3px;line-height:12.3px;color:#000;transform:translateX(-50%) scaleX(1.0);transform-origin:50% 0;">-</div>
<div class="t" style="left:1296.5px;top:645.84px;font-size:12px;line-height:12px;color:#000;font-weight:bold;transform:translateX(-100%) scaleX(1.0);transform-origin:100% 0;">1.908,06</div>
<div class="t" style="left:1380px;top:644.15px;font-size:14px;line-height:14px;color:#000;transform:translateX(-100%) scaleX(1.0);transform-origin:100% 0;">7.876,88</div>
<div style="left:26px;top:660px;width:1361px;height:20px;background:#ccccff"></div>
<div style="left:269px;top:660px;width:32px;height:20px;background:#fde9d9"></div>
<div class="t" style="left:28.5px;top:664.83px;font-size:13.2px;line-height:13.2px;color:#000;transform:scaleX(1.035);transform-origin:0 0;">12. Cajeros C</div>
<div class="t" style="left:191px;top:664.83px;font-size:13.2px;line-height:13.2px;color:#000;">$</div>
<div class="t" style="left:263px;top:664.83px;font-size:13.2px;line-height:13.2px;color:#000;transform:translateX(-100%) scaleX(1.0);transform-origin:100% 0;">8.757,11</div>
<div class="t" style="left:285px;top:665.67px;font-size:12.2px;line-height:12.2px;color:#000;font-weight:bold;transform:translateX(-50%) scaleX(1.05);transform-origin:50% 0;">0</div>
<div class="t" style="left:390.5px;top:665.59px;font-size:12.3px;line-height:12.3px;color:#000;transform:translateX(-100%) scaleX(1.0);transform-origin:100% 0;">8.757,11</div>
<div class="t" style="left:485.5px;top:665.59px;font-size:12.3px;line-height:12.3px;color:#000;transform:translateX(-100%) scaleX(1.0);transform-origin:100% 0;">-291,90</div>
<div class="t" style="left:559.5px;top:665.59px;font-size:12.3px;line-height:12.3px;color:#000;transform:translateX(-100%) scaleX(1.0);transform-origin:100% 0;">350,28</div>
<div class="t" style="left:642.5px;top:665.59px;font-size:12.3px;line-height:12.3px;color:#000;transform:translateX(-100%) scaleX(1.0);transform-origin:100% 0;">291,90</div>
<div class="t" style="left:804.5px;top:665.59px;font-size:12.3px;line-height:12.3px;color:#000;transform:translateX(-100%) scaleX(1.0);transform-origin:100% 0;">758,95</div>
<div class="t" style="left:933.5px;top:665.59px;font-size:12.3px;line-height:12.3px;color:#000;transform:translateX(-100%) scaleX(1.0);transform-origin:100% 0;">1.085,30</div>
<div class="t" style="left:993.5px;top:665.59px;font-size:12.3px;line-height:12.3px;color:#000;transform:translateX(-100%) scaleX(1.0);transform-origin:100% 0;">295,99</div>
<div class="t" style="left:1051.5px;top:665.59px;font-size:12.3px;line-height:12.3px;color:#000;transform:translateX(-100%) scaleX(1.0);transform-origin:100% 0;">295,99</div>
<div class="t" style="left:1109.5px;top:665.59px;font-size:12.3px;line-height:12.3px;color:#000;transform:translateX(-100%) scaleX(1.0);transform-origin:100% 0;">197,33</div>
<div class="t" style="left:1165.5px;top:665.59px;font-size:12.3px;line-height:12.3px;color:#000;transform:translateX(-100%) scaleX(1.0);transform-origin:100% 0;">49,33</div>
<div class="t" style="left:872.5px;top:665.84px;font-size:12px;line-height:12px;color:#000;font-weight:bold;transform:translateX(-100%) scaleX(1.0);transform-origin:100% 0;">9.866,34</div>
<div class="t" style="left:708px;top:665.59px;font-size:12.3px;line-height:12.3px;color:#000;transform:translateX(-50%) scaleX(1.0);transform-origin:50% 0;">-</div>
<div class="t" style="left:1203px;top:665.59px;font-size:12.3px;line-height:12.3px;color:#000;transform:translateX(-50%) scaleX(1.0);transform-origin:50% 0;">-</div>
<div class="t" style="left:1296.5px;top:665.59px;font-size:12.3px;line-height:12.3px;color:#000;transform:translateX(-100%) scaleX(1.0);transform-origin:100% 0;">1.923,94</div>
<div class="t" style="left:1380px;top:664.15px;font-size:14px;line-height:14px;color:#000;transform:translateX(-100%) scaleX(1.0);transform-origin:100% 0;">7.942,41</div>
<div style="left:269px;top:680px;width:32px;height:20px;background:#fde9d9"></div>
<div class="t" style="left:29px;top:685.84px;font-size:12px;line-height:12px;color:#000;">13. Personal Auxiliar A</div>
<div class="t" style="left:191px;top:684.83px;font-size:13.2px;line-height:13.2px;color:#000;">$</div>
<div class="t" style="left:263px;top:684.83px;font-size:13.2px;line-height:13.2px;color:#000;transform:translateX(-100%) scaleX(1.0);transform-origin:100% 0;">8.628,77</div>
<div class="t" style="left:285px;top:685.67px;font-size:12.2px;line-height:12.2px;color:#000;font-weight:bold;transform:translateX(-50%) scaleX(1.05);transform-origin:50% 0;">0</div>
<div class="t" style="left:390.5px;top:685.59px;font-size:12.3px;line-height:12.3px;color:#000;transform:translateX(-100%) scaleX(1.0);transform-origin:100% 0;">8.628,77</div>
<div class="t" style="left:485.5px;top:685.59px;font-size:12.3px;line-height:12.3px;color:#000;transform:translateX(-100%) scaleX(1.0);transform-origin:100% 0;">-287,63</div>
<div class="t" style="left:559.5px;top:685.59px;font-size:12.3px;line-height:12.3px;color:#000;transform:translateX(-100%) scaleX(1.0);transform-origin:100% 0;">345,15</div>
<div class="t" style="left:642.5px;top:685.59px;font-size:12.3px;line-height:12.3px;color:#000;transform:translateX(-100%) scaleX(1.0);transform-origin:100% 0;">287,63</div>
<div class="t" style="left:804.5px;top:685.59px;font-size:12.3px;line-height:12.3px;color:#000;transform:translateX(-100%) scaleX(1.0);transform-origin:100% 0;">747,83</div>
<div class="t" style="left:933.5px;top:685.59px;font-size:12.3px;line-height:12.3px;color:#000;transform:translateX(-100%) scaleX(1.0);transform-origin:100% 0;">1.069,39</div>
<div class="t" style="left:993.5px;top:685.59px;font-size:12.3px;line-height:12.3px;color:#000;transform:translateX(-100%) scaleX(1.0);transform-origin:100% 0;">291,65</div>
<div class="t" style="left:1051.5px;top:685.59px;font-size:12.3px;line-height:12.3px;color:#000;transform:translateX(-100%) scaleX(1.0);transform-origin:100% 0;">291,65</div>
<div class="t" style="left:1109.5px;top:685.59px;font-size:12.3px;line-height:12.3px;color:#000;transform:translateX(-100%) scaleX(1.0);transform-origin:100% 0;">194,43</div>
<div class="t" style="left:1165.5px;top:685.59px;font-size:12.3px;line-height:12.3px;color:#000;transform:translateX(-100%) scaleX(1.0);transform-origin:100% 0;">48,61</div>
<div class="t" style="left:872.5px;top:685.84px;font-size:12px;line-height:12px;color:#000;font-weight:bold;transform:translateX(-100%) scaleX(1.0);transform-origin:100% 0;">9.721,75</div>
<div class="t" style="left:708px;top:685.59px;font-size:12.3px;line-height:12.3px;color:#000;transform:translateX(-50%) scaleX(1.0);transform-origin:50% 0;">-</div>
<div class="t" style="left:1203px;top:685.59px;font-size:12.3px;line-height:12.3px;color:#000;transform:translateX(-50%) scaleX(1.0);transform-origin:50% 0;">-</div>
<div class="t" style="left:1296.5px;top:685.84px;font-size:12px;line-height:12px;color:#000;font-weight:bold;transform:translateX(-100%) scaleX(1.0);transform-origin:100% 0;">1.895,74</div>
<div class="t" style="left:1380px;top:684.15px;font-size:14px;line-height:14px;color:#000;transform:translateX(-100%) scaleX(1.0);transform-origin:100% 0;">7.826,01</div>
<div style="left:26px;top:700px;width:1361px;height:20px;background:#ccccff"></div>
<div style="left:269px;top:700px;width:32px;height:20px;background:#fde9d9"></div>
<div class="t" style="left:28.5px;top:704.83px;font-size:13.2px;line-height:13.2px;color:#000;transform:scaleX(1.035);transform-origin:0 0;">14. Personal Auxiliar B</div>
<div class="t" style="left:191px;top:704.83px;font-size:13.2px;line-height:13.2px;color:#000;">$</div>
<div class="t" style="left:263px;top:704.83px;font-size:13.2px;line-height:13.2px;color:#000;transform:translateX(-100%) scaleX(1.0);transform-origin:100% 0;">8.708,99</div>
<div class="t" style="left:285px;top:705.67px;font-size:12.2px;line-height:12.2px;color:#000;font-weight:bold;transform:translateX(-50%) scaleX(1.05);transform-origin:50% 0;">0</div>
<div class="t" style="left:390.5px;top:705.59px;font-size:12.3px;line-height:12.3px;color:#000;transform:translateX(-100%) scaleX(1.0);transform-origin:100% 0;">8.708,99</div>
<div class="t" style="left:485.5px;top:705.59px;font-size:12.3px;line-height:12.3px;color:#000;transform:translateX(-100%) scaleX(1.0);transform-origin:100% 0;">-290,30</div>
<div class="t" style="left:559.5px;top:705.59px;font-size:12.3px;line-height:12.3px;color:#000;transform:translateX(-100%) scaleX(1.0);transform-origin:100% 0;">348,36</div>
<div class="t" style="left:642.5px;top:705.59px;font-size:12.3px;line-height:12.3px;color:#000;transform:translateX(-100%) scaleX(1.0);transform-origin:100% 0;">290,30</div>
<div class="t" style="left:804.5px;top:705.59px;font-size:12.3px;line-height:12.3px;color:#000;transform:translateX(-100%) scaleX(1.0);transform-origin:100% 0;">754,78</div>
<div class="t" style="left:933.5px;top:705.59px;font-size:12.3px;line-height:12.3px;color:#000;transform:translateX(-100%) scaleX(1.0);transform-origin:100% 0;">1.079,33</div>
<div class="t" style="left:993.5px;top:705.59px;font-size:12.3px;line-height:12.3px;color:#000;transform:translateX(-100%) scaleX(1.0);transform-origin:100% 0;">294,36</div>
<div class="t" style="left:1051.5px;top:705.59px;font-size:12.3px;line-height:12.3px;color:#000;transform:translateX(-100%) scaleX(1.0);transform-origin:100% 0;">294,36</div>
<div class="t" style="left:1109.5px;top:705.59px;font-size:12.3px;line-height:12.3px;color:#000;transform:translateX(-100%) scaleX(1.0);transform-origin:100% 0;">196,24</div>
<div class="t" style="left:1165.5px;top:705.59px;font-size:12.3px;line-height:12.3px;color:#000;transform:translateX(-100%) scaleX(1.0);transform-origin:100% 0;">49,06</div>
<div class="t" style="left:872.5px;top:705.84px;font-size:12px;line-height:12px;color:#000;font-weight:bold;transform:translateX(-100%) scaleX(1.0);transform-origin:100% 0;">9.812,13</div>
<div class="t" style="left:708px;top:705.59px;font-size:12.3px;line-height:12.3px;color:#000;transform:translateX(-50%) scaleX(1.0);transform-origin:50% 0;">-</div>
<div class="t" style="left:1203px;top:705.59px;font-size:12.3px;line-height:12.3px;color:#000;transform:translateX(-50%) scaleX(1.0);transform-origin:50% 0;">-</div>
<div class="t" style="left:1296.5px;top:705.59px;font-size:12.3px;line-height:12.3px;color:#000;transform:translateX(-100%) scaleX(1.0);transform-origin:100% 0;">1.913,37</div>
<div class="t" style="left:1380px;top:704.15px;font-size:14px;line-height:14px;color:#000;transform:translateX(-100%) scaleX(1.0);transform-origin:100% 0;">7.898,76</div>
<div style="left:269px;top:720px;width:32px;height:20px;background:#fde9d9"></div>
<div class="t" style="left:29px;top:725.84px;font-size:12px;line-height:12px;color:#000;">15. Personal Auxiliar C</div>
<div class="t" style="left:191px;top:724.83px;font-size:13.2px;line-height:13.2px;color:#000;">$</div>
<div class="t" style="left:263px;top:724.83px;font-size:13.2px;line-height:13.2px;color:#000;transform:translateX(-100%) scaleX(1.0);transform-origin:100% 0;">8.973,68</div>
<div class="t" style="left:285px;top:725.67px;font-size:12.2px;line-height:12.2px;color:#000;font-weight:bold;transform:translateX(-50%) scaleX(1.05);transform-origin:50% 0;">0</div>
<div class="t" style="left:390.5px;top:725.59px;font-size:12.3px;line-height:12.3px;color:#000;transform:translateX(-100%) scaleX(1.0);transform-origin:100% 0;">8.973,68</div>
<div class="t" style="left:485.5px;top:725.59px;font-size:12.3px;line-height:12.3px;color:#000;transform:translateX(-100%) scaleX(1.0);transform-origin:100% 0;">-299,12</div>
<div class="t" style="left:559.5px;top:725.59px;font-size:12.3px;line-height:12.3px;color:#000;transform:translateX(-100%) scaleX(1.0);transform-origin:100% 0;">358,95</div>
<div class="t" style="left:642.5px;top:725.59px;font-size:12.3px;line-height:12.3px;color:#000;transform:translateX(-100%) scaleX(1.0);transform-origin:100% 0;">299,12</div>
<div class="t" style="left:804.5px;top:725.59px;font-size:12.3px;line-height:12.3px;color:#000;transform:translateX(-100%) scaleX(1.0);transform-origin:100% 0;">777,72</div>
<div class="t" style="left:933.5px;top:725.59px;font-size:12.3px;line-height:12.3px;color:#000;transform:translateX(-100%) scaleX(1.0);transform-origin:100% 0;">1.112,14</div>
<div class="t" style="left:993.5px;top:725.59px;font-size:12.3px;line-height:12.3px;color:#000;transform:translateX(-100%) scaleX(1.0);transform-origin:100% 0;">303,31</div>
<div class="t" style="left:1051.5px;top:725.59px;font-size:12.3px;line-height:12.3px;color:#000;transform:translateX(-100%) scaleX(1.0);transform-origin:100% 0;">303,31</div>
<div class="t" style="left:1109.5px;top:725.59px;font-size:12.3px;line-height:12.3px;color:#000;transform:translateX(-100%) scaleX(1.0);transform-origin:100% 0;">202,21</div>
<div class="t" style="left:1165.5px;top:725.59px;font-size:12.3px;line-height:12.3px;color:#000;transform:translateX(-100%) scaleX(1.0);transform-origin:100% 0;">50,55</div>
<div class="t" style="left:872.5px;top:725.84px;font-size:12px;line-height:12px;color:#000;font-weight:bold;transform:translateX(-100%) scaleX(1.0);transform-origin:100% 0;">10.110,35</div>
<div class="t" style="left:708px;top:725.59px;font-size:12.3px;line-height:12.3px;color:#000;transform:translateX(-50%) scaleX(1.0);transform-origin:50% 0;">-</div>
<div class="t" style="left:1203px;top:725.59px;font-size:12.3px;line-height:12.3px;color:#000;transform:translateX(-50%) scaleX(1.0);transform-origin:50% 0;">-</div>
<div class="t" style="left:1296.5px;top:725.84px;font-size:12px;line-height:12px;color:#000;font-weight:bold;transform:translateX(-100%) scaleX(1.0);transform-origin:100% 0;">1.971,52</div>
<div class="t" style="left:1380px;top:724.15px;font-size:14px;line-height:14px;color:#000;transform:translateX(-100%) scaleX(1.0);transform-origin:100% 0;">8.138,83</div>
<div style="left:26px;top:740px;width:1361px;height:20px;background:#ccccff"></div>
<div style="left:269px;top:740px;width:32px;height:20px;background:#fde9d9"></div>
<div class="t" style="left:28.5px;top:744.83px;font-size:13.2px;line-height:13.2px;color:#000;transform:scaleX(1.035);transform-origin:0 0;">16. Auxiliar Especializado</div>
<div class="t" style="left:191px;top:744.83px;font-size:13.2px;line-height:13.2px;color:#000;">$</div>
<div class="t" style="left:263px;top:744.83px;font-size:13.2px;line-height:13.2px;color:#000;transform:translateX(-100%) scaleX(1.0);transform-origin:100% 0;">8.725,03</div>
<div class="t" style="left:285px;top:745.67px;font-size:12.2px;line-height:12.2px;color:#000;font-weight:bold;transform:translateX(-50%) scaleX(1.05);transform-origin:50% 0;">0</div>
<div class="t" style="left:390.5px;top:745.59px;font-size:12.3px;line-height:12.3px;color:#000;transform:translateX(-100%) scaleX(1.0);transform-origin:100% 0;">8.725,03</div>
<div class="t" style="left:485.5px;top:745.59px;font-size:12.3px;line-height:12.3px;color:#000;transform:translateX(-100%) scaleX(1.0);transform-origin:100% 0;">-290,83</div>
<div class="t" style="left:559.5px;top:745.59px;font-size:12.3px;line-height:12.3px;color:#000;transform:translateX(-100%) scaleX(1.0);transform-origin:100% 0;">349,00</div>
<div class="t" style="left:642.5px;top:745.59px;font-size:12.3px;line-height:12.3px;color:#000;transform:translateX(-100%) scaleX(1.0);transform-origin:100% 0;">290,83</div>
<div class="t" style="left:804.5px;top:745.59px;font-size:12.3px;line-height:12.3px;color:#000;transform:translateX(-100%) scaleX(1.0);transform-origin:100% 0;">756,17</div>
<div class="t" style="left:933.5px;top:745.59px;font-size:12.3px;line-height:12.3px;color:#000;transform:translateX(-100%) scaleX(1.0);transform-origin:100% 0;">1.081,32</div>
<div class="t" style="left:993.5px;top:745.59px;font-size:12.3px;line-height:12.3px;color:#000;transform:translateX(-100%) scaleX(1.0);transform-origin:100% 0;">294,91</div>
<div class="t" style="left:1051.5px;top:745.59px;font-size:12.3px;line-height:12.3px;color:#000;transform:translateX(-100%) scaleX(1.0);transform-origin:100% 0;">294,91</div>
<div class="t" style="left:1109.5px;top:745.59px;font-size:12.3px;line-height:12.3px;color:#000;transform:translateX(-100%) scaleX(1.0);transform-origin:100% 0;">196,60</div>
<div class="t" style="left:1165.5px;top:745.59px;font-size:12.3px;line-height:12.3px;color:#000;transform:translateX(-100%) scaleX(1.0);transform-origin:100% 0;">49,15</div>
<div class="t" style="left:872.5px;top:745.84px;font-size:12px;line-height:12px;color:#000;font-weight:bold;transform:translateX(-100%) scaleX(1.0);transform-origin:100% 0;">9.830,20</div>
<div class="t" style="left:708px;top:745.59px;font-size:12.3px;line-height:12.3px;color:#000;transform:translateX(-50%) scaleX(1.0);transform-origin:50% 0;">-</div>
<div class="t" style="left:1203px;top:745.59px;font-size:12.3px;line-height:12.3px;color:#000;transform:translateX(-50%) scaleX(1.0);transform-origin:50% 0;">-</div>
<div class="t" style="left:1296.5px;top:745.59px;font-size:12.3px;line-height:12.3px;color:#000;transform:translateX(-100%) scaleX(1.0);transform-origin:100% 0;">1.916,89</div>
<div class="t" style="left:1380px;top:744.15px;font-size:14px;line-height:14px;color:#000;transform:translateX(-100%) scaleX(1.0);transform-origin:100% 0;">7.913,31</div>
<div style="left:269px;top:760px;width:32px;height:20px;background:#fde9d9"></div>
<div class="t" style="left:29px;top:765.84px;font-size:12px;line-height:12px;color:#000;">17. Auxiliar Especializado B</div>
<div class="t" style="left:191px;top:764.83px;font-size:13.2px;line-height:13.2px;color:#000;">$</div>
<div class="t" style="left:263px;top:764.83px;font-size:13.2px;line-height:13.2px;color:#000;transform:translateX(-100%) scaleX(1.0);transform-origin:100% 0;">8.869,41</div>
<div class="t" style="left:285px;top:765.67px;font-size:12.2px;line-height:12.2px;color:#000;font-weight:bold;transform:translateX(-50%) scaleX(1.05);transform-origin:50% 0;">0</div>
<div class="t" style="left:390.5px;top:765.59px;font-size:12.3px;line-height:12.3px;color:#000;transform:translateX(-100%) scaleX(1.0);transform-origin:100% 0;">8.869,41</div>
<div class="t" style="left:485.5px;top:765.59px;font-size:12.3px;line-height:12.3px;color:#000;transform:translateX(-100%) scaleX(1.0);transform-origin:100% 0;">-295,65</div>
<div class="t" style="left:559.5px;top:765.59px;font-size:12.3px;line-height:12.3px;color:#000;transform:translateX(-100%) scaleX(1.0);transform-origin:100% 0;">354,78</div>
<div class="t" style="left:642.5px;top:765.59px;font-size:12.3px;line-height:12.3px;color:#000;transform:translateX(-100%) scaleX(1.0);transform-origin:100% 0;">295,65</div>
<div class="t" style="left:804.5px;top:765.59px;font-size:12.3px;line-height:12.3px;color:#000;transform:translateX(-100%) scaleX(1.0);transform-origin:100% 0;">768,68</div>
<div class="t" style="left:933.5px;top:765.59px;font-size:12.3px;line-height:12.3px;color:#000;transform:translateX(-100%) scaleX(1.0);transform-origin:100% 0;">1.099,22</div>
<div class="t" style="left:993.5px;top:765.59px;font-size:12.3px;line-height:12.3px;color:#000;transform:translateX(-100%) scaleX(1.0);transform-origin:100% 0;">299,79</div>
<div class="t" style="left:1051.5px;top:765.59px;font-size:12.3px;line-height:12.3px;color:#000;transform:translateX(-100%) scaleX(1.0);transform-origin:100% 0;">299,79</div>
<div class="t" style="left:1109.5px;top:765.59px;font-size:12.3px;line-height:12.3px;color:#000;transform:translateX(-100%) scaleX(1.0);transform-origin:100% 0;">199,86</div>
<div class="t" style="left:1165.5px;top:765.59px;font-size:12.3px;line-height:12.3px;color:#000;transform:translateX(-100%) scaleX(1.0);transform-origin:100% 0;">49,96</div>
<div class="t" style="left:872.5px;top:765.84px;font-size:12px;line-height:12px;color:#000;font-weight:bold;transform:translateX(-100%) scaleX(1.0);transform-origin:100% 0;">9.992,87</div>
<div class="t" style="left:708px;top:765.59px;font-size:12.3px;line-height:12.3px;color:#000;transform:translateX(-50%) scaleX(1.0);transform-origin:50% 0;">-</div>
<div class="t" style="left:1203px;top:765.59px;font-size:12.3px;line-height:12.3px;color:#000;transform:translateX(-50%) scaleX(1.0);transform-origin:50% 0;">-</div>
<div class="t" style="left:1296.5px;top:765.84px;font-size:12px;line-height:12px;color:#000;font-weight:bold;transform:translateX(-100%) scaleX(1.0);transform-origin:100% 0;">1.948,61</div>
<div class="t" style="left:1380px;top:764.15px;font-size:14px;line-height:14px;color:#000;transform:translateX(-100%) scaleX(1.0);transform-origin:100% 0;">8.044,26</div>
<div style="left:26px;top:780px;width:1361px;height:20px;background:#ccccff"></div>
<div style="left:269px;top:780px;width:32px;height:20px;background:#fde9d9"></div>
<div class="t" style="left:28.5px;top:784.83px;font-size:13.2px;line-height:13.2px;color:#000;transform:scaleX(1.035);transform-origin:0 0;">18. Vendedor A</div>
<div class="t" style="left:191px;top:784.83px;font-size:13.2px;line-height:13.2px;color:#000;">$</div>
<div class="t" style="left:263px;top:784.83px;font-size:13.2px;line-height:13.2px;color:#000;transform:translateX(-100%) scaleX(1.0);transform-origin:100% 0;">8.628,75</div>
<div class="t" style="left:285px;top:785.67px;font-size:12.2px;line-height:12.2px;color:#000;font-weight:bold;transform:translateX(-50%) scaleX(1.05);transform-origin:50% 0;">0</div>
<div class="t" style="left:390.5px;top:785.59px;font-size:12.3px;line-height:12.3px;color:#000;transform:translateX(-100%) scaleX(1.0);transform-origin:100% 0;">8.628,75</div>
<div class="t" style="left:485.5px;top:785.59px;font-size:12.3px;line-height:12.3px;color:#000;transform:translateX(-100%) scaleX(1.0);transform-origin:100% 0;">-287,63</div>
<div class="t" style="left:559.5px;top:785.59px;font-size:12.3px;line-height:12.3px;color:#000;transform:translateX(-100%) scaleX(1.0);transform-origin:100% 0;">345,15</div>
<div class="t" style="left:642.5px;top:785.59px;font-size:12.3px;line-height:12.3px;color:#000;transform:translateX(-100%) scaleX(1.0);transform-origin:100% 0;">287,63</div>
<div class="t" style="left:804.5px;top:785.59px;font-size:12.3px;line-height:12.3px;color:#000;transform:translateX(-100%) scaleX(1.0);transform-origin:100% 0;">747,83</div>
<div class="t" style="left:933.5px;top:785.59px;font-size:12.3px;line-height:12.3px;color:#000;transform:translateX(-100%) scaleX(1.0);transform-origin:100% 0;">1.069,39</div>
<div class="t" style="left:993.5px;top:785.59px;font-size:12.3px;line-height:12.3px;color:#000;transform:translateX(-100%) scaleX(1.0);transform-origin:100% 0;">291,65</div>
<div class="t" style="left:1051.5px;top:785.59px;font-size:12.3px;line-height:12.3px;color:#000;transform:translateX(-100%) scaleX(1.0);transform-origin:100% 0;">291,65</div>
<div class="t" style="left:1109.5px;top:785.59px;font-size:12.3px;line-height:12.3px;color:#000;transform:translateX(-100%) scaleX(1.0);transform-origin:100% 0;">194,43</div>
<div class="t" style="left:1165.5px;top:785.59px;font-size:12.3px;line-height:12.3px;color:#000;transform:translateX(-100%) scaleX(1.0);transform-origin:100% 0;">48,61</div>
<div class="t" style="left:872.5px;top:785.84px;font-size:12px;line-height:12px;color:#000;font-weight:bold;transform:translateX(-100%) scaleX(1.0);transform-origin:100% 0;">9.721,73</div>
<div class="t" style="left:708px;top:785.59px;font-size:12.3px;line-height:12.3px;color:#000;transform:translateX(-50%) scaleX(1.0);transform-origin:50% 0;">-</div>
<div class="t" style="left:1203px;top:785.59px;font-size:12.3px;line-height:12.3px;color:#000;transform:translateX(-50%) scaleX(1.0);transform-origin:50% 0;">-</div>
<div class="t" style="left:1296.5px;top:785.59px;font-size:12.3px;line-height:12.3px;color:#000;transform:translateX(-100%) scaleX(1.0);transform-origin:100% 0;">1.895,74</div>
<div class="t" style="left:1380px;top:784.15px;font-size:14px;line-height:14px;color:#000;transform:translateX(-100%) scaleX(1.0);transform-origin:100% 0;">7.825,99</div>
<div style="left:269px;top:800px;width:32px;height:20px;background:#fde9d9"></div>
<div class="t" style="left:29px;top:805.84px;font-size:12px;line-height:12px;color:#000;">19. Vendedor B</div>
<div class="t" style="left:191px;top:804.83px;font-size:13.2px;line-height:13.2px;color:#000;">$</div>
<div class="t" style="left:263px;top:804.83px;font-size:13.2px;line-height:13.2px;color:#000;transform:translateX(-100%) scaleX(1.0);transform-origin:100% 0;">8.869,41</div>
<div class="t" style="left:285px;top:805.67px;font-size:12.2px;line-height:12.2px;color:#000;font-weight:bold;transform:translateX(-50%) scaleX(1.05);transform-origin:50% 0;">0</div>
<div class="t" style="left:390.5px;top:805.59px;font-size:12.3px;line-height:12.3px;color:#000;transform:translateX(-100%) scaleX(1.0);transform-origin:100% 0;">8.869,41</div>
<div class="t" style="left:485.5px;top:805.59px;font-size:12.3px;line-height:12.3px;color:#000;transform:translateX(-100%) scaleX(1.0);transform-origin:100% 0;">-295,65</div>
<div class="t" style="left:559.5px;top:805.59px;font-size:12.3px;line-height:12.3px;color:#000;transform:translateX(-100%) scaleX(1.0);transform-origin:100% 0;">354,78</div>
<div class="t" style="left:642.5px;top:805.59px;font-size:12.3px;line-height:12.3px;color:#000;transform:translateX(-100%) scaleX(1.0);transform-origin:100% 0;">295,65</div>
<div class="t" style="left:804.5px;top:805.59px;font-size:12.3px;line-height:12.3px;color:#000;transform:translateX(-100%) scaleX(1.0);transform-origin:100% 0;">768,68</div>
<div class="t" style="left:933.5px;top:805.59px;font-size:12.3px;line-height:12.3px;color:#000;transform:translateX(-100%) scaleX(1.0);transform-origin:100% 0;">1.099,22</div>
<div class="t" style="left:993.5px;top:805.59px;font-size:12.3px;line-height:12.3px;color:#000;transform:translateX(-100%) scaleX(1.0);transform-origin:100% 0;">299,79</div>
<div class="t" style="left:1051.5px;top:805.59px;font-size:12.3px;line-height:12.3px;color:#000;transform:translateX(-100%) scaleX(1.0);transform-origin:100% 0;">299,79</div>
<div class="t" style="left:1109.5px;top:805.59px;font-size:12.3px;line-height:12.3px;color:#000;transform:translateX(-100%) scaleX(1.0);transform-origin:100% 0;">199,86</div>
<div class="t" style="left:1165.5px;top:805.59px;font-size:12.3px;line-height:12.3px;color:#000;transform:translateX(-100%) scaleX(1.0);transform-origin:100% 0;">49,96</div>
<div class="t" style="left:872.5px;top:805.84px;font-size:12px;line-height:12px;color:#000;font-weight:bold;transform:translateX(-100%) scaleX(1.0);transform-origin:100% 0;">9.992,87</div>
<div class="t" style="left:708px;top:805.59px;font-size:12.3px;line-height:12.3px;color:#000;transform:translateX(-50%) scaleX(1.0);transform-origin:50% 0;">-</div>
<div class="t" style="left:1203px;top:805.59px;font-size:12.3px;line-height:12.3px;color:#000;transform:translateX(-50%) scaleX(1.0);transform-origin:50% 0;">-</div>
<div class="t" style="left:1296.5px;top:805.84px;font-size:12px;line-height:12px;color:#000;font-weight:bold;transform:translateX(-100%) scaleX(1.0);transform-origin:100% 0;">1.948,61</div>
<div class="t" style="left:1380px;top:804.15px;font-size:14px;line-height:14px;color:#000;transform:translateX(-100%) scaleX(1.0);transform-origin:100% 0;">8.044,26</div>
<div style="left:26px;top:440px;width:1362px;height:1px;background:#000"></div>
<div style="left:268px;top:440px;width:1px;height:382px;background:#000"></div>
<div style="left:301px;top:440px;width:1px;height:382px;background:#000"></div>
<div style="left:810px;top:440px;width:1px;height:382px;background:#000"></div>
<div style="left:878px;top:440px;width:1px;height:382px;background:#000"></div>
<div style="left:1224px;top:440px;width:1px;height:382px;background:#000"></div>
<div style="left:1302px;top:440px;width:1px;height:382px;background:#000"></div>
<div style="left:1387px;top:440px;width:1px;height:382px;background:#000"></div>
<div style="left:185px;top:440px;width:1px;height:381px;background:#b8c8de"></div>
<div style="left:269px;top:820px;width:32px;height:2px;background:#fde9d9"></div>
<div style="left:565px;top:168px;width:1px;height:653px;background:#4d4d4d"></div>
<div style="left:26px;top:437px;width:1361px;height:3px;background:#fff"></div>
<div style="left:1387px;top:436px;width:197px;height:1px;background:#d0d7e5"></div>
<div style="left:1387px;top:440px;width:197px;height:1px;background:#d0d7e5"></div>
<div style="left:571px;top:226px;width:242px;height:102px;border-radius:7px;overflow:hidden;background:#6f88cf">
<svg width="242" height="102" viewBox="0 0 242 102" style="position:absolute;left:0;top:0">
<defs>
<linearGradient id="lg1" x1="0" y1="0" x2="0" y2="1"><stop offset="0" stop-color="#7d95d6"/><stop offset=".45" stop-color="#5f78c2"/><stop offset=".75" stop-color="#7088cc"/><stop offset="1" stop-color="#a5b6e4"/></linearGradient>
<filter id="bl" x="-20%" y="-20%" width="140%" height="140%"><feGaussianBlur stdDeviation="4"/></filter>
<filter id="bl2"><feGaussianBlur stdDeviation="1.2"/></filter>
</defs>
<rect width="242" height="102" fill="url(#lg1)"/>
<rect x="160" y="-8" width="90" height="24" fill="#d3dcf4" filter="url(#bl)" opacity=".95"/>
<rect x="70" y="-6" width="40" height="14" fill="#9fb1e4" filter="url(#bl)" opacity=".8"/>
<rect x="60" y="36" width="120" height="20" fill="#5a72c0" filter="url(#bl)" opacity=".6"/>
<rect x="-10" y="20" width="25" height="60" fill="#4f68b8" filter="url(#bl)" opacity=".7"/>
<rect x="-6" y="72" width="50" height="34" fill="#b4c2ea" filter="url(#bl)" opacity=".9"/>
<polygon points="15,0 26,0 47,82 38,84" fill="#191b38"/>
<polygon points="26,0 45,0 68,68 47,80" fill="#dce3f6"/>
<path d="M26,0 L47,80" stroke="#ffffff" stroke-width="1" stroke-dasharray="1.5,1"/>
<polygon points="45,0 50,0 70,66 68,68" fill="#3a4276"/>
<polygon points="38,84 47,80 68,68 92,70 100,80 75,92 40,92" fill="#c2cdee"/>
<polygon points="38,86 96,84 98,92 40,93" fill="#16182f"/>
<polygon points="72,76 88,74 100,102 84,102" fill="#e3e8f8"/>
<path d="M91,54 Q120,48 150,52 Q175,56 185,68 L170,86 Q130,88 95,86 Q88,70 91,54 Z" fill="#2b3a86"/>
<path d="M92,54 Q120,48 150,52 Q172,55 182,64" fill="none" stroke="#f0f4ff" stroke-width="1.6" filter="url(#bl2)"/>
<path d="M96,70 Q120,62 140,66" fill="none" stroke="#d6defa" stroke-width="1"/>
<path d="M100,80 Q115,76 130,80" fill="none" stroke="#d6defa" stroke-width="1"/>
<path d="M166,62 Q200,52 242,50 L242,102 L168,102 Q160,82 166,62Z" fill="#8196d6"/>
<path d="M166,62 Q200,52 242,50" fill="none" stroke="#f4f6ff" stroke-width="1.5" filter="url(#bl2)"/>
<path d="M175,82 Q205,78 235,86" fill="none" stroke="#c9d3f2" stroke-width="1"/>
<path d="M100,94 L150,92 L152,97 L104,99Z" fill="#3a4a9a"/>
<path d="M150,90 Q160,86 175,92" fill="none" stroke="#e8edfb" stroke-width="1.2"/>
</svg>
<div class="t" style="left:61px;top:7px;font-size:26px;line-height:30px;font-weight:bold;color:#d3d9ea;transform:scaleX(0.688);transform-origin:0 0;letter-spacing:-0.2px;text-shadow:1px 0 0 #2c3668,-1px 0 0 #2c3668,0 1px 0 #2c3668,0 -1px 0 #2c3668,1px 1px 1px #1c2450">Ignacioonline.com.ar</div>
</div>
<div style="left:571px;top:329px;width:242px;height:9px;border-radius:7px 7px 0 0;background:linear-gradient(180deg,rgba(215,222,240,.95),rgba(225,230,242,.7))"></div>
<div style="left:571px;top:338px;width:242px;height:36px;background:linear-gradient(180deg,rgba(190,195,225,.2),rgba(170,170,210,.08) 50%,rgba(150,140,190,0))"></div>
<div style="left:26px;top:820px;width:1361px;height:2px;background:#ccccff"></div>
<div style="left:0px;top:822px;width:1600px;height:15px;background:linear-gradient(#a9c0e3,#96b2dc)"></div>
<div style="left:0px;top:837px;width:1600px;height:1px;background:#5b7db3"></div>
<div style="left:0px;top:838px;width:1600px;height:3px;background:#d2def0"></div>
<div style="left:0px;top:822px;width:62px;height:15px;background:linear-gradient(#e6eef9,#d2e0f3 50%,#c3d6ef 55%,#d3e2f5);border-right:1px solid #8aa6cf;box-sizing:border-box"></div>
<div style="left:6px;top:826px;width:1.6px;height:7px;background:#1d3c8a"></div>
<div style="left:7px;top:826px;width:0;height:0;border-top:3.5px solid transparent;border-bottom:3.5px solid transparent;border-right:5px solid #1d3c8a"></div>
<div style="left:21px;top:826px;width:0;height:0;border-top:3.5px solid transparent;border-bottom:3.5px solid transparent;border-right:4px solid #1d3c8a"></div>
<div style="left:36px;top:826px;width:0;height:0;border-top:3.5px solid transparent;border-bottom:3.5px solid transparent;border-left:4px solid #1d3c8a"></div>
<div style="left:49px;top:826px;width:0;height:0;border-top:3.5px solid transparent;border-bottom:3.5px solid transparent;border-left:5px solid #1d3c8a"></div>
<div style="left:54px;top:826px;width:1.6px;height:7px;background:#1d3c8a"></div>
<svg style="position:absolute;left:0;top:822px" width="340" height="16">
<defs><linearGradient id="tg" x1="0" y1="0" x2="0" y2="1"><stop offset="0" stop-color="#eef4fc"/><stop offset=".5" stop-color="#dde8f7"/><stop offset="1" stop-color="#c9daf1"/></linearGradient>
<linearGradient id="ta" x1="0" y1="0" x2="0" y2="1"><stop offset="0" stop-color="#ffffff"/><stop offset=".7" stop-color="#ffffff"/><stop offset="1" stop-color="#dfe9f6"/></linearGradient></defs>
<path d="M280.5,14.5 L289.5,0.5 L323,0.5 L309,14.5 Z" fill="url(#tg)" stroke="#7f9cc7"/>
<path d="M236.5,14.5 L246,0.5 L292,0.5 L282,14.5 Z" fill="url(#tg)" stroke="#7f9cc7"/>
<path d="M192,14.5 L201.5,0.5 L248,0.5 L238,14.5 Z" fill="url(#tg)" stroke="#7f9cc7"/>
<path d="M62.5,0 L62.5,14.5 L188,14.5 L198,2 L198,0" fill="url(#ta)" stroke="#8aa6cf"/>
<rect x="63" y="0" width="134" height="2" fill="#fff"/>
</svg>
<div class="t" style="left:72px;top:824.00px;font-size:12.4px;line-height:12.4px;color:#15397a;font-weight:bold;transform:scaleX(1.02);transform-origin:0 0;">SEPTIEMBRE 2014</div>
<div class="t" style="left:202.5px;top:824.17px;font-size:12.2px;line-height:12.2px;color:#15397a;">Nota</div>
<div class="t" style="left:246.8px;top:824.17px;font-size:12.2px;line-height:12.2px;color:#15397a;transform:scaleX(0.92);transform-origin:0 0;">INFO</div>
<svg style="position:absolute;left:292px;top:823px" width="18" height="14" viewBox="0 0 18 14"><rect x="4" y="4" width="12" height="9" rx="1" fill="#f4f6f8" stroke="#6f7f99"/><path d="M4,4 l-2,-2 M4,4 l-3,0 M4,4 l0,-3 M4,4 l2,-2" stroke="#f0a000" stroke-width="1.5"/><circle cx="4" cy="4" r="2" fill="#ffd040"/></svg>
<div style="left:953px;top:823px;width:5px;height:13px;background:#f2f6fb;border:1px solid #52709f;box-sizing:border-box"></div>
<div style="left:963px;top:825px;width:0;height:0;border-top:4.5px solid transparent;border-bottom:4.5px solid transparent;border-right:5px solid #2e3f66"></div>
<div style="left:975px;top:822px;width:556px;height:15px;background:linear-gradient(#f5f8fc,#e2eaf5 50%,#cfdcee 55%,#dfe8f4);border:1px solid #7b95bd;border-radius:2px;box-sizing:border-box"></div>
<div style="left:1250px;top:826px;width:1px;height:7px;background:#8a9bb4"></div>
<div style="left:1252px;top:826px;width:1px;height:7px;background:#8a9bb4"></div>
<div style="left:1254px;top:826px;width:1px;height:7px;background:#8a9bb4"></div>
<div style="left:1256px;top:826px;width:1px;height:7px;background:#8a9bb4"></div>
<div style="left:1531px;top:822px;width:53px;height:15px;background:#7d9cc8"></div>
<div style="left:1573px;top:825px;width:0;height:0;border-top:4.5px solid transparent;border-bottom:4.5px solid transparent;border-left:5px solid #2e3f66"></div>
<div style="left:1584px;top:822px;width:16px;height:15px;background:#79a0d6"></div>
<div style="left:1584px;top:168px;width:16px;height:654px;background:#7698c4"></div>
<div style="left:1584px;top:168px;width:1px;height:654px;background:#4f6a9a"></div>
<div style="left:1585px;top:168px;width:1px;height:654px;background:#9db8dd"></div>
<div style="left:1587px;top:173px;width:0;height:0;border-left:5px solid transparent;border-right:5px solid transparent;border-bottom:5px solid #3a4b6b"></div>
<div style="left:1585px;top:186px;width:15px;height:504px;background:linear-gradient(90deg,#e4eaf3,#dfe6f0 45%,#c3d2e6 60%,#b9cae3);border:1px solid #52709f;border-radius:2px;box-sizing:border-box"></div>
<div style="left:1589px;top:434px;width:8px;height:1px;background:#7d8696"></div>
<div style="left:1589px;top:436px;width:8px;height:1px;background:#7d8696"></div>
<div style="left:1589px;top:438px;width:8px;height:1px;background:#7d8696"></div>
<div style="left:1589px;top:440px;width:8px;height:1px;background:#7d8696"></div>
<div style="left:1587px;top:810px;width:0;height:0;border-left:5px solid transparent;border-right:5px solid transparent;border-top:5px solid #3a4b6b"></div>
</div></body></html>
